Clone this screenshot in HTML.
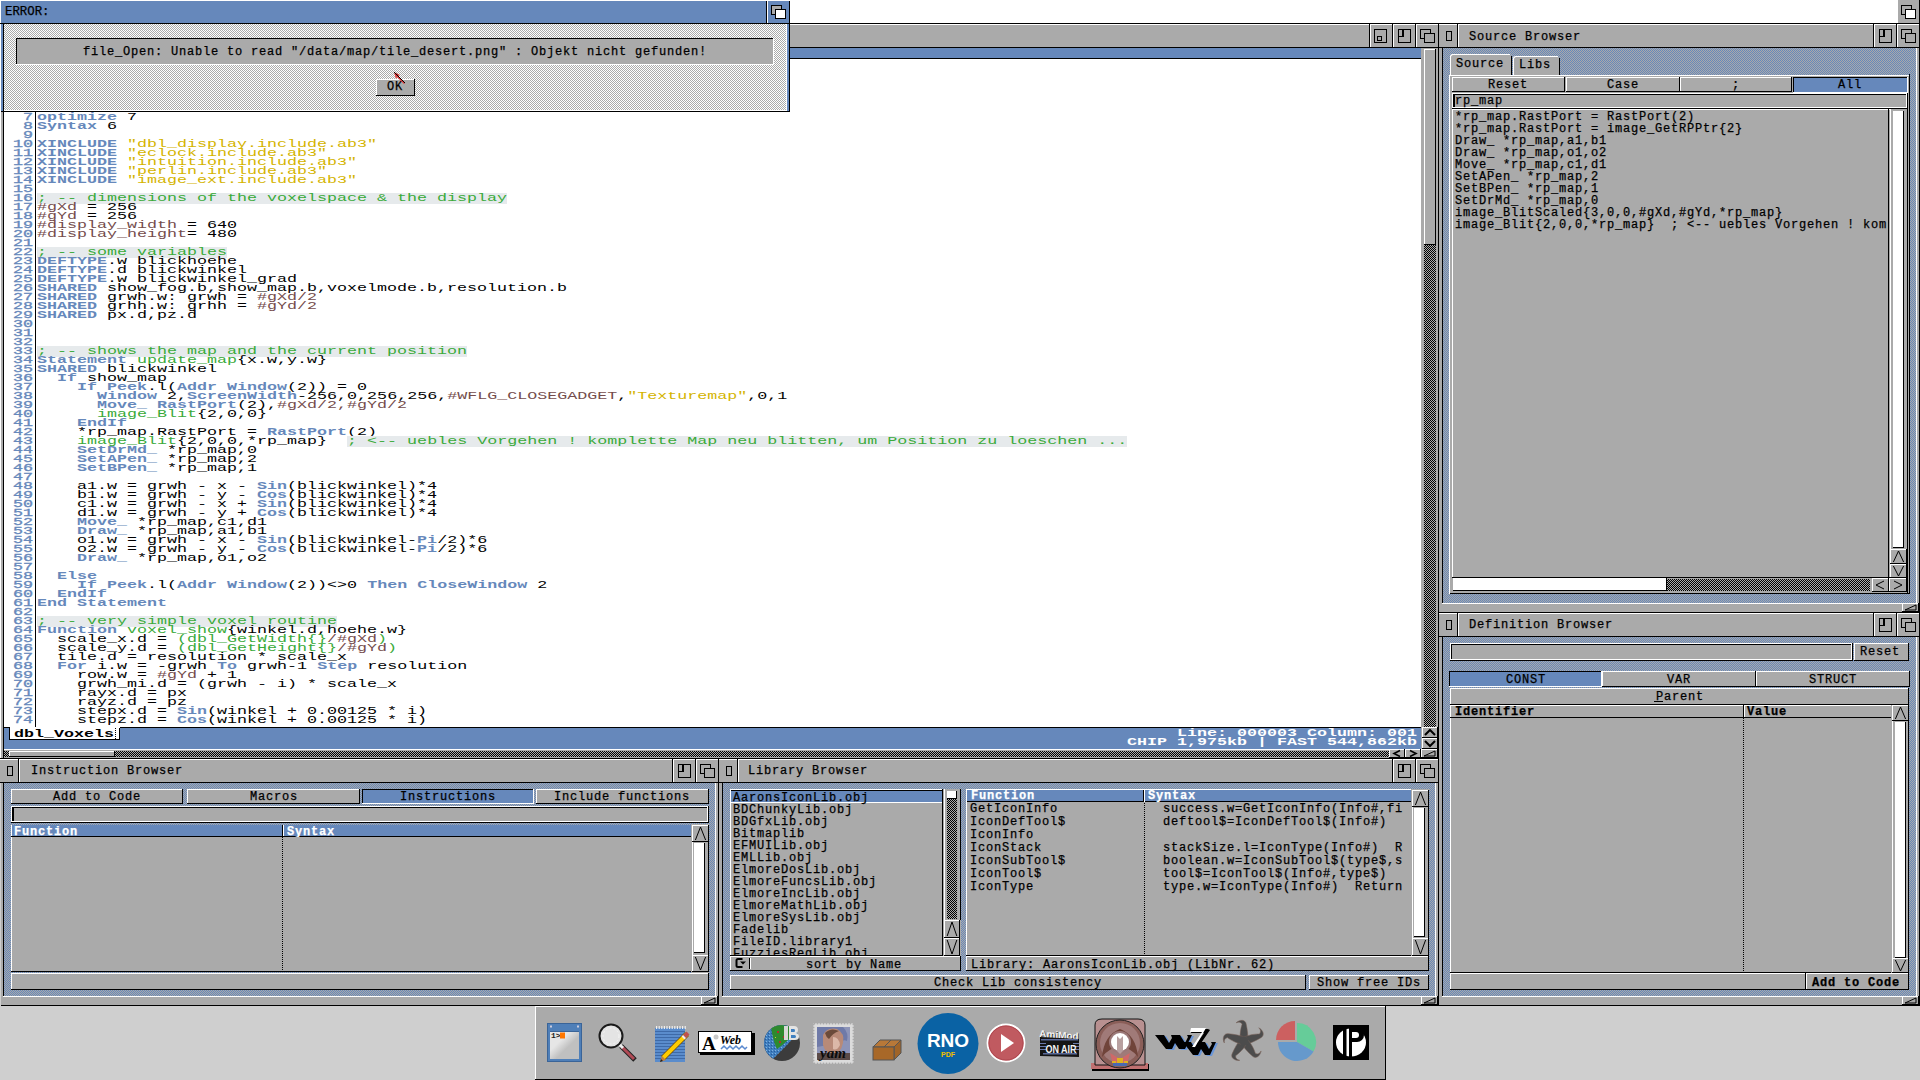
<!DOCTYPE html><html><head><meta charset="utf-8"><style>
*{margin:0;padding:0}
html,body{width:1920px;height:1080px;overflow:hidden;background:#cfcfcf}
body>div{position:absolute}
.t{position:absolute;white-space:pre;font-family:"Liberation Mono",monospace;transform-origin:0 0}
.c{position:absolute;white-space:pre;font-family:"Liberation Mono",monospace;font-size:10px;line-height:9px;transform-origin:0 0;transform:scaleX(1.6667);color:#000}
.K{color:#6688bb;font-weight:bold}.L{color:#6688bb;-webkit-text-stroke:0.3px #6688bb}.S{color:#d4b400}.C{color:#3aaa3a;background:#e6eaec}.F{color:#3aaa3a}.N{color:#744c4c}
</style></head><body><div style="left:0px;top:0px;width:1920px;height:1080px;background:#cfcfcf;"></div>
<div style="left:0px;top:0px;width:1920px;height:23px;background:#ffffff;"></div>
<div style="left:0px;top:23px;width:1439px;height:1px;background:#000000;"></div>
<div style="left:0px;top:24px;width:1439px;height:23px;background:#aaaaaa;"></div>
<div style="left:0px;top:24px;width:1439px;height:1px;background:#ffffff;"></div>
<div style="left:0px;top:47px;width:1439px;height:1px;background:#000000;"></div>
<div style="left:1369px;top:24px;width:1px;height:23px;background:#000000;"></div>
<div style="left:1370px;top:24px;width:1px;height:23px;background:#ffffff;"></div>
<div style="left:1374px;top:29px;width:13px;height:14px;background:#aaaaaa;border:1px solid #000;box-sizing:border-box;"></div>
<div style="left:1377px;top:36px;width:5px;height:5px;background:#aaaaaa;border:1px solid #000;box-sizing:border-box;"></div>
<div style="left:1392px;top:24px;width:1px;height:23px;background:#000000;"></div>
<div style="left:1393px;top:24px;width:1px;height:23px;background:#ffffff;"></div>
<div style="left:1398px;top:29px;width:13px;height:14px;background:#aaaaaa;border:1px solid #000;box-sizing:border-box;"></div>
<div style="left:1399px;top:30px;width:5px;height:7px;background:#aaaaaa;border-right:2px solid #000;border-bottom:1px solid #000;box-sizing:border-box;"></div>
<div style="left:1415px;top:24px;width:1px;height:23px;background:#000000;"></div>
<div style="left:1416px;top:24px;width:1px;height:23px;background:#ffffff;"></div>
<div style="left:1420px;top:29px;width:11px;height:10px;background:#aaaaaa;border:1px solid #000;box-sizing:border-box;"></div>
<div style="left:1424px;top:33px;width:11px;height:10px;background:#aaaaaa;border:1px solid #000;box-sizing:border-box;"></div>
<div style="left:1438px;top:23px;width:1px;height:25px;background:#000000;"></div>
<div style="left:0px;top:48px;width:3px;height:711px;background:#aaaaaa;"></div>
<div style="left:3px;top:48px;width:1px;height:711px;background:#000000;"></div>
<div style="left:0px;top:24px;width:1px;height:735px;background:#ffffff;"></div>
<div style="left:4px;top:48px;width:1417px;height:10px;background:#6688bb;"></div>
<div style="left:4px;top:58px;width:1417px;height:1px;background:#000000;"></div>
<div style="left:4px;top:59px;width:1417px;height:668px;background:#ffffff;"></div>
<div style="left:35px;top:59px;width:1px;height:668px;background:#000000;"></div>
<div style="left:1421px;top:48px;width:17px;height:711px;background:#aaaaaa;"></div>
<div style="left:1438px;top:48px;width:1px;height:711px;background:#000000;"></div>
<div style="left:1423px;top:48px;width:1px;height:679px;background:#aaaaaa;"></div>
<div style="left:1424px;top:48px;width:12px;height:679px;background:repeating-conic-gradient(#aaaaaa 0 25%,#000000 0 50%) 0 0/2px 2px;"></div>
<div style="left:1424px;top:48px;width:12px;height:2px;background:#aaaaaa;"></div>
<div style="left:1424px;top:49px;width:12px;height:196px;background:#aaaaaa;"></div>
<div style="left:1424px;top:49px;width:12px;height:1px;background:#ffffff;"></div>
<div style="left:1424px;top:49px;width:1px;height:196px;background:#ffffff;"></div>
<div style="left:1424px;top:244px;width:12px;height:1px;background:#000000;"></div>
<div style="left:1435px;top:49px;width:1px;height:196px;background:#000000;"></div>
<div style="left:1422px;top:727px;width:16px;height:11px;background:#aaaaaa;"></div>
<div style="left:1422px;top:727px;width:16px;height:1px;background:#ffffff;"></div>
<div style="left:1422px;top:727px;width:1px;height:11px;background:#ffffff;"></div>
<div style="left:1422px;top:737px;width:16px;height:1px;background:#000000;"></div>
<div style="left:1437px;top:727px;width:1px;height:11px;background:#000000;"></div>
<div style="left:1422px;top:738px;width:16px;height:11px;background:#aaaaaa;"></div>
<div style="left:1422px;top:738px;width:16px;height:1px;background:#ffffff;"></div>
<div style="left:1422px;top:738px;width:1px;height:11px;background:#ffffff;"></div>
<div style="left:1422px;top:748px;width:16px;height:1px;background:#000000;"></div>
<div style="left:1437px;top:738px;width:1px;height:11px;background:#000000;"></div>
<div style="left:4px;top:727px;width:1417px;height:1px;background:#000000;"></div>
<div style="left:4px;top:728px;width:1417px;height:21px;background:#6688bb;"></div>
<div style="left:10px;top:727px;width:110px;height:13px;background:#ffffff;"></div>
<div style="left:9px;top:728px;width:1px;height:12px;background:#000000;"></div>
<div style="left:9px;top:739px;width:111px;height:1px;background:#000000;"></div>
<div style="left:119px;top:728px;width:1px;height:12px;background:#000000;"></div>
<div style="left:4px;top:749px;width:1417px;height:1px;background:#ffffff;"></div>
<div style="left:4px;top:750px;width:1386px;height:1px;background:#aaaaaa;"></div>
<div style="left:4px;top:751px;width:1386px;height:6px;background:repeating-conic-gradient(#aaaaaa 0 25%,#000000 0 50%) 0 0/2px 2px;"></div>
<div style="left:9px;top:751px;width:106px;height:6px;background:#aaaaaa;"></div>
<div style="left:9px;top:751px;width:106px;height:1px;background:#ffffff;"></div>
<div style="left:9px;top:751px;width:1px;height:6px;background:#ffffff;"></div>
<div style="left:9px;top:756px;width:106px;height:1px;background:#000000;"></div>
<div style="left:114px;top:751px;width:1px;height:6px;background:#000000;"></div>
<div style="left:4px;top:757px;width:1386px;height:1px;background:#aaaaaa;"></div>
<div style="left:1389px;top:749px;width:16px;height:9px;background:#aaaaaa;"></div>
<div style="left:1389px;top:749px;width:16px;height:1px;background:#ffffff;"></div>
<div style="left:1389px;top:749px;width:1px;height:9px;background:#ffffff;"></div>
<div style="left:1389px;top:757px;width:16px;height:1px;background:#000000;"></div>
<div style="left:1404px;top:749px;width:1px;height:9px;background:#000000;"></div>
<div style="left:1405px;top:749px;width:16px;height:9px;background:#aaaaaa;"></div>
<div style="left:1405px;top:749px;width:16px;height:1px;background:#ffffff;"></div>
<div style="left:1405px;top:749px;width:1px;height:9px;background:#ffffff;"></div>
<div style="left:1405px;top:757px;width:16px;height:1px;background:#000000;"></div>
<div style="left:1420px;top:749px;width:1px;height:9px;background:#000000;"></div>
<div style="left:1421px;top:749px;width:17px;height:9px;background:#aaaaaa;"></div>
<div style="left:1421px;top:749px;width:17px;height:1px;background:#ffffff;"></div>
<div style="left:1421px;top:749px;width:1px;height:9px;background:#ffffff;"></div>
<div style="left:1421px;top:757px;width:17px;height:1px;background:#000000;"></div>
<div style="left:1437px;top:749px;width:1px;height:9px;background:#000000;"></div>
<div style="left:0px;top:758px;width:1439px;height:1px;background:#000000;"></div>
<div class="c" style="left:3px;top:113px;font-weight:normal"><span class="L">  7</span></div>
<div class="c" style="left:37px;top:113px;font-weight:normal"><span class="K">optimize</span> 7</div>
<div class="c" style="left:3px;top:122px;font-weight:normal"><span class="L">  8</span></div>
<div class="c" style="left:37px;top:122px;font-weight:normal"><span class="K">Syntax</span> 6</div>
<div class="c" style="left:3px;top:131px;font-weight:normal"><span class="L">  9</span></div>
<div class="c" style="left:3px;top:140px;font-weight:normal"><span class="L"> 10</span></div>
<div class="c" style="left:37px;top:140px;font-weight:normal"><span class="K">XINCLUDE</span> <span class="S">"dbl_display.include.ab3"</span></div>
<div class="c" style="left:3px;top:149px;font-weight:normal"><span class="L"> 11</span></div>
<div class="c" style="left:37px;top:149px;font-weight:normal"><span class="K">XINCLUDE</span> <span class="S">"eclock.include.ab3"</span></div>
<div class="c" style="left:3px;top:158px;font-weight:normal"><span class="L"> 12</span></div>
<div class="c" style="left:37px;top:158px;font-weight:normal"><span class="K">XINCLUDE</span> <span class="S">"intuition.include.ab3"</span></div>
<div class="c" style="left:3px;top:167px;font-weight:normal"><span class="L"> 13</span></div>
<div class="c" style="left:37px;top:167px;font-weight:normal"><span class="K">XINCLUDE</span> <span class="S">"perlin.include.ab3"</span></div>
<div class="c" style="left:3px;top:176px;font-weight:normal"><span class="L"> 14</span></div>
<div class="c" style="left:37px;top:176px;font-weight:normal"><span class="K">XINCLUDE</span> <span class="S">"image_ext.include.ab3"</span></div>
<div class="c" style="left:3px;top:185px;font-weight:normal"><span class="L"> 15</span></div>
<div class="c" style="left:3px;top:194px;font-weight:normal"><span class="L"> 16</span></div>
<div class="c" style="left:37px;top:194px;font-weight:normal"><span class="C">; -- dimensions of the voxelspace &amp; the display</span></div>
<div class="c" style="left:3px;top:203px;font-weight:normal"><span class="L"> 17</span></div>
<div class="c" style="left:37px;top:203px;font-weight:normal"><span class="N">#gXd</span> = 256</div>
<div class="c" style="left:3px;top:212px;font-weight:normal"><span class="L"> 18</span></div>
<div class="c" style="left:37px;top:212px;font-weight:normal"><span class="N">#gYd</span> = 256</div>
<div class="c" style="left:3px;top:221px;font-weight:normal"><span class="L"> 19</span></div>
<div class="c" style="left:37px;top:221px;font-weight:normal"><span class="N">#display_width</span> = 640</div>
<div class="c" style="left:3px;top:230px;font-weight:normal"><span class="L"> 20</span></div>
<div class="c" style="left:37px;top:230px;font-weight:normal"><span class="N">#display_height</span>= 480</div>
<div class="c" style="left:3px;top:239px;font-weight:normal"><span class="L"> 21</span></div>
<div class="c" style="left:3px;top:248px;font-weight:normal"><span class="L"> 22</span></div>
<div class="c" style="left:37px;top:248px;font-weight:normal"><span class="C">; -- some variables</span></div>
<div class="c" style="left:3px;top:257px;font-weight:normal"><span class="L"> 23</span></div>
<div class="c" style="left:37px;top:257px;font-weight:normal"><span class="K">DEFTYPE</span>.w blickhoehe</div>
<div class="c" style="left:3px;top:266px;font-weight:normal"><span class="L"> 24</span></div>
<div class="c" style="left:37px;top:266px;font-weight:normal"><span class="K">DEFTYPE</span>.d blickwinkel</div>
<div class="c" style="left:3px;top:275px;font-weight:normal"><span class="L"> 25</span></div>
<div class="c" style="left:37px;top:275px;font-weight:normal"><span class="K">DEFTYPE</span>.w blickwinkel_grad</div>
<div class="c" style="left:3px;top:284px;font-weight:normal"><span class="L"> 26</span></div>
<div class="c" style="left:37px;top:284px;font-weight:normal"><span class="K">SHARED</span> show_fog.b,show_map.b,voxelmode.b,resolution.b</div>
<div class="c" style="left:3px;top:293px;font-weight:normal"><span class="L"> 27</span></div>
<div class="c" style="left:37px;top:293px;font-weight:normal"><span class="K">SHARED</span> grwh.w: grwh = <span class="N">#gXd/2</span></div>
<div class="c" style="left:3px;top:302px;font-weight:normal"><span class="L"> 28</span></div>
<div class="c" style="left:37px;top:302px;font-weight:normal"><span class="K">SHARED</span> grhh.w: grhh = <span class="N">#gYd/2</span></div>
<div class="c" style="left:3px;top:311px;font-weight:normal"><span class="L"> 29</span></div>
<div class="c" style="left:37px;top:311px;font-weight:normal"><span class="K">SHARED</span> px.d,pz.d</div>
<div class="c" style="left:3px;top:320px;font-weight:normal"><span class="L"> 30</span></div>
<div class="c" style="left:3px;top:329px;font-weight:normal"><span class="L"> 31</span></div>
<div class="c" style="left:3px;top:338px;font-weight:normal"><span class="L"> 32</span></div>
<div class="c" style="left:3px;top:347px;font-weight:normal"><span class="L"> 33</span></div>
<div class="c" style="left:37px;top:347px;font-weight:normal"><span class="C">; -- shows the map and the current position</span></div>
<div class="c" style="left:3px;top:356px;font-weight:normal"><span class="L"> 34</span></div>
<div class="c" style="left:37px;top:356px;font-weight:normal"><span class="K">Statement</span> <span class="F">update_map</span>{x.w,y.w}</div>
<div class="c" style="left:3px;top:365px;font-weight:normal"><span class="L"> 35</span></div>
<div class="c" style="left:37px;top:365px;font-weight:normal"><span class="K">SHARED</span> blickwinkel</div>
<div class="c" style="left:3px;top:374px;font-weight:normal"><span class="L"> 36</span></div>
<div class="c" style="left:37px;top:374px;font-weight:normal">  <span class="K">If</span> show_map</div>
<div class="c" style="left:3px;top:383px;font-weight:normal"><span class="L"> 37</span></div>
<div class="c" style="left:37px;top:383px;font-weight:normal">    <span class="K">If Peek</span>.l(<span class="K">Addr Window</span>(2)) = 0</div>
<div class="c" style="left:3px;top:392px;font-weight:normal"><span class="L"> 38</span></div>
<div class="c" style="left:37px;top:392px;font-weight:normal">      <span class="K">Window</span> 2,<span class="K">ScreenWidth</span>-256,0,256,256,<span class="N">#WFLG_CLOSEGADGET</span>,<span class="S">"Texturemap"</span>,0,1</div>
<div class="c" style="left:3px;top:401px;font-weight:normal"><span class="L"> 39</span></div>
<div class="c" style="left:37px;top:401px;font-weight:normal">      <span class="K">Move_ RastPort</span>(2),<span class="N">#gXd/2,#gYd/2</span></div>
<div class="c" style="left:3px;top:410px;font-weight:normal"><span class="L"> 40</span></div>
<div class="c" style="left:37px;top:410px;font-weight:normal">      <span class="F">image_Blit</span>{2,0,0}</div>
<div class="c" style="left:3px;top:419px;font-weight:normal"><span class="L"> 41</span></div>
<div class="c" style="left:37px;top:419px;font-weight:normal">    <span class="K">EndIf</span></div>
<div class="c" style="left:3px;top:428px;font-weight:normal"><span class="L"> 42</span></div>
<div class="c" style="left:37px;top:428px;font-weight:normal">    *rp_map.RastPort = <span class="K">RastPort</span>(2)</div>
<div class="c" style="left:3px;top:437px;font-weight:normal"><span class="L"> 43</span></div>
<div class="c" style="left:37px;top:437px;font-weight:normal">    <span class="F">image_Blit</span>{2,0,0,*rp_map}  <span class="C">; &lt;-- uebles Vorgehen ! komplette Map neu blitten, um Position zu loeschen ...</span></div>
<div class="c" style="left:3px;top:446px;font-weight:normal"><span class="L"> 44</span></div>
<div class="c" style="left:37px;top:446px;font-weight:normal">    <span class="K">SetDrMd_</span> *rp_map,0</div>
<div class="c" style="left:3px;top:455px;font-weight:normal"><span class="L"> 45</span></div>
<div class="c" style="left:37px;top:455px;font-weight:normal">    <span class="K">SetAPen_</span> *rp_map,2</div>
<div class="c" style="left:3px;top:464px;font-weight:normal"><span class="L"> 46</span></div>
<div class="c" style="left:37px;top:464px;font-weight:normal">    <span class="K">SetBPen_</span> *rp_map,1</div>
<div class="c" style="left:3px;top:473px;font-weight:normal"><span class="L"> 47</span></div>
<div class="c" style="left:3px;top:482px;font-weight:normal"><span class="L"> 48</span></div>
<div class="c" style="left:37px;top:482px;font-weight:normal">    a1.w = grwh - x - <span class="K">Sin</span>(blickwinkel)*4</div>
<div class="c" style="left:3px;top:491px;font-weight:normal"><span class="L"> 49</span></div>
<div class="c" style="left:37px;top:491px;font-weight:normal">    b1.w = grwh - y - <span class="K">Cos</span>(blickwinkel)*4</div>
<div class="c" style="left:3px;top:500px;font-weight:normal"><span class="L"> 50</span></div>
<div class="c" style="left:37px;top:500px;font-weight:normal">    c1.w = grwh - x + <span class="K">Sin</span>(blickwinkel)*4</div>
<div class="c" style="left:3px;top:509px;font-weight:normal"><span class="L"> 51</span></div>
<div class="c" style="left:37px;top:509px;font-weight:normal">    d1.w = grwh - y + <span class="K">Cos</span>(blickwinkel)*4</div>
<div class="c" style="left:3px;top:518px;font-weight:normal"><span class="L"> 52</span></div>
<div class="c" style="left:37px;top:518px;font-weight:normal">    <span class="K">Move_</span> *rp_map,c1,d1</div>
<div class="c" style="left:3px;top:527px;font-weight:normal"><span class="L"> 53</span></div>
<div class="c" style="left:37px;top:527px;font-weight:normal">    <span class="K">Draw_</span> *rp_map,a1,b1</div>
<div class="c" style="left:3px;top:536px;font-weight:normal"><span class="L"> 54</span></div>
<div class="c" style="left:37px;top:536px;font-weight:normal">    o1.w = grwh - x - <span class="K">Sin</span>(blickwinkel-<span class="K">Pi</span>/2)*6</div>
<div class="c" style="left:3px;top:545px;font-weight:normal"><span class="L"> 55</span></div>
<div class="c" style="left:37px;top:545px;font-weight:normal">    o2.w = grwh - y - <span class="K">Cos</span>(blickwinkel-<span class="K">Pi</span>/2)*6</div>
<div class="c" style="left:3px;top:554px;font-weight:normal"><span class="L"> 56</span></div>
<div class="c" style="left:37px;top:554px;font-weight:normal">    <span class="K">Draw_</span> *rp_map,o1,o2</div>
<div class="c" style="left:3px;top:563px;font-weight:normal"><span class="L"> 57</span></div>
<div class="c" style="left:3px;top:572px;font-weight:normal"><span class="L"> 58</span></div>
<div class="c" style="left:37px;top:572px;font-weight:normal">  <span class="K">Else</span></div>
<div class="c" style="left:3px;top:581px;font-weight:normal"><span class="L"> 59</span></div>
<div class="c" style="left:37px;top:581px;font-weight:normal">    <span class="K">If Peek</span>.l(<span class="K">Addr Window</span>(2))&lt;&gt;0 <span class="K">Then CloseWindow</span> 2</div>
<div class="c" style="left:3px;top:590px;font-weight:normal"><span class="L"> 60</span></div>
<div class="c" style="left:37px;top:590px;font-weight:normal">  <span class="K">EndIf</span></div>
<div class="c" style="left:3px;top:599px;font-weight:normal"><span class="L"> 61</span></div>
<div class="c" style="left:37px;top:599px;font-weight:normal"><span class="K">End Statement</span></div>
<div class="c" style="left:3px;top:608px;font-weight:normal"><span class="L"> 62</span></div>
<div class="c" style="left:3px;top:617px;font-weight:normal"><span class="L"> 63</span></div>
<div class="c" style="left:37px;top:617px;font-weight:normal"><span class="C">; -- very simple voxel routine</span></div>
<div class="c" style="left:3px;top:626px;font-weight:normal"><span class="L"> 64</span></div>
<div class="c" style="left:37px;top:626px;font-weight:normal"><span class="K">Function</span> <span class="F">voxel_show</span>{winkel.d,hoehe.w}</div>
<div class="c" style="left:3px;top:635px;font-weight:normal"><span class="L"> 65</span></div>
<div class="c" style="left:37px;top:635px;font-weight:normal">  scale_x.d = <span class="F">(dbl_GetWidth{}</span><span class="N">/#gXd</span><span class="F">)</span></div>
<div class="c" style="left:3px;top:644px;font-weight:normal"><span class="L"> 66</span></div>
<div class="c" style="left:37px;top:644px;font-weight:normal">  scale_y.d = <span class="F">(dbl_GetHeight{}</span><span class="N">/#gYd</span><span class="F">)</span></div>
<div class="c" style="left:3px;top:653px;font-weight:normal"><span class="L"> 67</span></div>
<div class="c" style="left:37px;top:653px;font-weight:normal">  tile.d = resolution * scale_x</div>
<div class="c" style="left:3px;top:662px;font-weight:normal"><span class="L"> 68</span></div>
<div class="c" style="left:37px;top:662px;font-weight:normal">  <span class="K">For</span> i.w = -grwh <span class="K">To</span> grwh-1 <span class="K">Step</span> resolution</div>
<div class="c" style="left:3px;top:671px;font-weight:normal"><span class="L"> 69</span></div>
<div class="c" style="left:37px;top:671px;font-weight:normal">    row.w = <span class="N">#gYd</span> + 1</div>
<div class="c" style="left:3px;top:680px;font-weight:normal"><span class="L"> 70</span></div>
<div class="c" style="left:37px;top:680px;font-weight:normal">    grwh_mi.d = (grwh - i) * scale_x</div>
<div class="c" style="left:3px;top:689px;font-weight:normal"><span class="L"> 71</span></div>
<div class="c" style="left:37px;top:689px;font-weight:normal">    rayx.d = px</div>
<div class="c" style="left:3px;top:698px;font-weight:normal"><span class="L"> 72</span></div>
<div class="c" style="left:37px;top:698px;font-weight:normal">    rayz.d = pz</div>
<div class="c" style="left:3px;top:707px;font-weight:normal"><span class="L"> 73</span></div>
<div class="c" style="left:37px;top:707px;font-weight:normal">    stepx.d = <span class="K">Sin</span>(winkel + 0.00125 * i)</div>
<div class="c" style="left:3px;top:716px;font-weight:normal"><span class="L"> 74</span></div>
<div class="c" style="left:37px;top:716px;font-weight:normal">    stepz.d = <span class="K">Cos</span>(winkel + 0.00125 * i)</div>
<div style="left:1439px;top:23px;width:481px;height:1px;background:#000000;"></div>
<div style="left:1439px;top:24px;width:481px;height:23px;background:#aaaaaa;"></div>
<div style="left:1439px;top:24px;width:481px;height:1px;background:#ffffff;"></div>
<div style="left:1439px;top:47px;width:481px;height:1px;background:#000000;"></div>
<div style="left:1873px;top:24px;width:1px;height:23px;background:#000000;"></div>
<div style="left:1874px;top:24px;width:1px;height:23px;background:#ffffff;"></div>
<div style="left:1879px;top:29px;width:13px;height:14px;background:#aaaaaa;border:1px solid #000;box-sizing:border-box;"></div>
<div style="left:1880px;top:30px;width:5px;height:7px;background:#aaaaaa;border-right:2px solid #000;border-bottom:1px solid #000;box-sizing:border-box;"></div>
<div style="left:1896px;top:24px;width:1px;height:23px;background:#000000;"></div>
<div style="left:1897px;top:24px;width:1px;height:23px;background:#ffffff;"></div>
<div style="left:1901px;top:29px;width:11px;height:10px;background:#aaaaaa;border:1px solid #000;box-sizing:border-box;"></div>
<div style="left:1905px;top:33px;width:11px;height:10px;background:#aaaaaa;border:1px solid #000;box-sizing:border-box;"></div>
<div style="left:1919px;top:23px;width:1px;height:25px;background:#000000;"></div>
<div style="left:1446px;top:31px;width:6px;height:10px;background:#aaaaaa;border:1px solid #000;box-sizing:border-box;"></div>
<div style="left:1457px;top:24px;width:1px;height:23px;background:#000000;"></div>
<div style="left:1458px;top:24px;width:1px;height:23px;background:#ffffff;"></div>
<div class="t" style="left:1469px;top:31px;font-weight:normal;font-size:12px;line-height:12px;color:#000000;letter-spacing:0.80px;-webkit-text-stroke:0.25px currentColor;">Source Browser</div>
<div style="left:1439px;top:48px;width:481px;height:565px;background:#aaaaaa;"></div>
<div style="left:1442px;top:48px;width:1px;height:555px;background:#000000;"></div>
<div style="left:1443px;top:48px;width:473px;height:555px;background:repeating-conic-gradient(#6688bb 0 25%,#aaaaaa 0 50%) 0 0/2px 2px;"></div>
<div style="left:1916px;top:48px;width:1px;height:555px;background:#ffffff;"></div>
<div style="left:1442px;top:603px;width:475px;height:1px;background:#ffffff;"></div>
<div style="left:1919px;top:48px;width:1px;height:565px;background:#000000;"></div>
<div style="left:1439px;top:612px;width:481px;height:1px;background:#000000;"></div>
<div style="left:1902px;top:603px;width:17px;height:9px;background:#aaaaaa;"></div>
<div style="left:1902px;top:603px;width:17px;height:1px;background:#ffffff;"></div>
<div style="left:1902px;top:603px;width:1px;height:9px;background:#ffffff;"></div>
<div style="left:1902px;top:611px;width:17px;height:1px;background:#000000;"></div>
<div style="left:1918px;top:603px;width:1px;height:9px;background:#000000;"></div>
<svg style="position:absolute;left:1902px;top:603px" width="17" height="9" viewBox="0 0 17 9"><polygon points="14,2 14,7 3,7" fill="none" stroke="#000" stroke-width="1"/></svg>
<div style="left:1450px;top:54px;width:62px;height:21px;background:#aaaaaa;border-top-left-radius:4px;border-top-right-radius:4px;"></div>
<div style="left:1452px;top:54px;width:58px;height:1px;background:#ffffff;"></div>
<div style="left:1450px;top:56px;width:1px;height:19px;background:#ffffff;"></div>
<div style="left:1511px;top:56px;width:1px;height:19px;background:#000000;"></div>
<div style="left:1450px;top:54px;width:3px;height:3px;border-top-left-radius:4px;border-top:1px solid #fff;border-left:1px solid #fff;box-sizing:border-box;"></div>
<div class="t" style="left:1456px;top:58px;font-weight:normal;font-size:12px;line-height:12px;color:#000000;letter-spacing:0.80px;-webkit-text-stroke:0.25px currentColor;">Source</div>
<div style="left:1513px;top:56px;width:47px;height:19px;background:#aaaaaa;border-top-left-radius:4px;border-top-right-radius:4px;"></div>
<div style="left:1515px;top:56px;width:43px;height:1px;background:#ffffff;"></div>
<div style="left:1513px;top:58px;width:1px;height:17px;background:#ffffff;"></div>
<div style="left:1559px;top:58px;width:1px;height:17px;background:#000000;"></div>
<div style="left:1513px;top:56px;width:3px;height:3px;border-top-left-radius:4px;border-top:1px solid #fff;border-left:1px solid #fff;box-sizing:border-box;"></div>
<div class="t" style="left:1519px;top:59px;font-weight:normal;font-size:12px;line-height:12px;color:#000000;letter-spacing:0.80px;-webkit-text-stroke:0.25px currentColor;">Libs</div>
<div style="left:1450px;top:75px;width:460px;height:519px;background:#aaaaaa;"></div>
<div style="left:1450px;top:75px;width:460px;height:1px;background:#ffffff;"></div>
<div style="left:1449px;top:75px;width:1px;height:519px;background:#ffffff;"></div>
<div style="left:1909px;top:74px;width:1px;height:520px;background:#000000;"></div>
<div style="left:1450px;top:593px;width:460px;height:1px;background:#000000;"></div>
<div style="left:1512px;top:75px;width:47px;height:1px;background:#aaaaaa;"></div>
<div style="left:1512px;top:75px;width:48px;height:1px;background:#ffffff;"></div>
<div style="left:1452px;top:77px;width:113px;height:15px;background:#aaaaaa;"></div>
<div style="left:1452px;top:77px;width:113px;height:1px;background:#ffffff;"></div>
<div style="left:1452px;top:77px;width:1px;height:15px;background:#ffffff;"></div>
<div style="left:1452px;top:91px;width:113px;height:1px;background:#000000;"></div>
<div style="left:1564px;top:77px;width:1px;height:15px;background:#000000;"></div>
<div class="t" style="left:1488px;top:79px;font-weight:normal;font-size:12px;line-height:12px;color:#000000;letter-spacing:0.80px;-webkit-text-stroke:0.25px currentColor;">Reset</div>
<div style="left:1566px;top:77px;width:114px;height:15px;background:#aaaaaa;"></div>
<div style="left:1566px;top:77px;width:114px;height:1px;background:#ffffff;"></div>
<div style="left:1566px;top:77px;width:1px;height:15px;background:#ffffff;"></div>
<div style="left:1566px;top:91px;width:114px;height:1px;background:#000000;"></div>
<div style="left:1679px;top:77px;width:1px;height:15px;background:#000000;"></div>
<div class="t" style="left:1607px;top:79px;font-weight:normal;font-size:12px;line-height:12px;color:#000000;letter-spacing:0.80px;-webkit-text-stroke:0.25px currentColor;">Case</div>
<div style="left:1680px;top:77px;width:112px;height:15px;background:#aaaaaa;"></div>
<div style="left:1680px;top:77px;width:112px;height:1px;background:#ffffff;"></div>
<div style="left:1680px;top:77px;width:1px;height:15px;background:#ffffff;"></div>
<div style="left:1680px;top:91px;width:112px;height:1px;background:#000000;"></div>
<div style="left:1791px;top:77px;width:1px;height:15px;background:#000000;"></div>
<div class="t" style="left:1732px;top:79px;font-weight:normal;font-size:12px;line-height:12px;color:#000000;letter-spacing:0.80px;-webkit-text-stroke:0.25px currentColor;">;</div>
<div style="left:1793px;top:77px;width:115px;height:16px;background:#6688bb;"></div>
<div style="left:1793px;top:77px;width:115px;height:1px;background:#000000;"></div>
<div style="left:1793px;top:77px;width:1px;height:16px;background:#000000;"></div>
<div style="left:1793px;top:92px;width:115px;height:1px;background:#ffffff;"></div>
<div style="left:1907px;top:77px;width:1px;height:16px;background:#ffffff;"></div>
<div class="t" style="left:1838px;top:79px;font-weight:normal;font-size:12px;line-height:12px;color:#000000;letter-spacing:0.80px;-webkit-text-stroke:0.25px currentColor;">All</div>
<div style="left:1452px;top:93px;width:456px;height:16px;background:#aaaaaa;"></div>
<div style="left:1452px;top:93px;width:456px;height:1px;background:#ffffff;"></div>
<div style="left:1452px;top:93px;width:1px;height:16px;background:#ffffff;"></div>
<div style="left:1452px;top:108px;width:456px;height:1px;background:#000000;"></div>
<div style="left:1907px;top:93px;width:1px;height:16px;background:#000000;"></div>
<div style="left:1453px;top:94px;width:454px;height:1px;background:#000000;"></div>
<div style="left:1453px;top:94px;width:1px;height:14px;background:#000000;"></div>
<div style="left:1453px;top:107px;width:454px;height:1px;background:#ffffff;"></div>
<div style="left:1906px;top:94px;width:1px;height:14px;background:#ffffff;"></div>
<div style="left:1454px;top:95px;width:1px;height:12px;background:#000000;"></div>
<div class="t" style="left:1455px;top:95px;font-weight:normal;font-size:12px;line-height:12px;color:#000000;letter-spacing:0.80px;-webkit-text-stroke:0.25px currentColor;">rp_map</div>
<div style="left:1452px;top:109px;width:438px;height:469px;background:#aaaaaa;"></div>
<div style="left:1452px;top:109px;width:438px;height:1px;background:#ffffff;"></div>
<div style="left:1452px;top:109px;width:1px;height:469px;background:#ffffff;"></div>
<div style="left:1888px;top:109px;width:1px;height:469px;background:#000000;"></div>
<div class="t" style="left:1455px;top:111px;font-weight:normal;font-size:12px;line-height:12px;color:#000000;letter-spacing:0.80px;-webkit-text-stroke:0.25px currentColor;">*rp_map.RastPort = RastPort(2)</div>
<div class="t" style="left:1455px;top:123px;font-weight:normal;font-size:12px;line-height:12px;color:#000000;letter-spacing:0.80px;-webkit-text-stroke:0.25px currentColor;">*rp_map.RastPort = image_GetRPPtr{2}</div>
<div class="t" style="left:1455px;top:135px;font-weight:normal;font-size:12px;line-height:12px;color:#000000;letter-spacing:0.80px;-webkit-text-stroke:0.25px currentColor;">Draw_ *rp_map,a1,b1</div>
<div class="t" style="left:1455px;top:147px;font-weight:normal;font-size:12px;line-height:12px;color:#000000;letter-spacing:0.80px;-webkit-text-stroke:0.25px currentColor;">Draw_ *rp_map,o1,o2</div>
<div class="t" style="left:1455px;top:159px;font-weight:normal;font-size:12px;line-height:12px;color:#000000;letter-spacing:0.80px;-webkit-text-stroke:0.25px currentColor;">Move_ *rp_map,c1,d1</div>
<div class="t" style="left:1455px;top:171px;font-weight:normal;font-size:12px;line-height:12px;color:#000000;letter-spacing:0.80px;-webkit-text-stroke:0.25px currentColor;">SetAPen_ *rp_map,2</div>
<div class="t" style="left:1455px;top:183px;font-weight:normal;font-size:12px;line-height:12px;color:#000000;letter-spacing:0.80px;-webkit-text-stroke:0.25px currentColor;">SetBPen_ *rp_map,1</div>
<div class="t" style="left:1455px;top:195px;font-weight:normal;font-size:12px;line-height:12px;color:#000000;letter-spacing:0.80px;-webkit-text-stroke:0.25px currentColor;">SetDrMd_ *rp_map,0</div>
<div class="t" style="left:1455px;top:207px;font-weight:normal;font-size:12px;line-height:12px;color:#000000;letter-spacing:0.80px;-webkit-text-stroke:0.25px currentColor;">image_BlitScaled{3,0,0,#gXd,#gYd,*rp_map}</div>
<div class="t" style="left:1455px;top:219px;font-weight:normal;font-size:12px;line-height:12px;color:#000000;letter-spacing:0.80px;-webkit-text-stroke:0.25px currentColor;">image_Blit{2,0,0,*rp_map}  ; &lt;-- uebles Vorgehen ! kom</div>
<div style="left:1890px;top:109px;width:18px;height:484px;background:#aaaaaa;"></div>
<div style="left:1890px;top:109px;width:1px;height:441px;background:#ffffff;"></div>
<div style="left:1907px;top:109px;width:1px;height:484px;background:#000000;"></div>
<div style="left:1893px;top:111px;width:11px;height:437px;background:#ffffff;"></div>
<div style="left:1893px;top:111px;width:11px;height:1px;background:#ffffff;"></div>
<div style="left:1893px;top:111px;width:1px;height:437px;background:#ffffff;"></div>
<div style="left:1893px;top:547px;width:11px;height:1px;background:#000000;"></div>
<div style="left:1903px;top:111px;width:1px;height:437px;background:#000000;"></div>
<div style="left:1890px;top:549px;width:17px;height:15px;background:#aaaaaa;"></div>
<div style="left:1890px;top:549px;width:17px;height:1px;background:#ffffff;"></div>
<div style="left:1890px;top:549px;width:1px;height:15px;background:#ffffff;"></div>
<div style="left:1890px;top:563px;width:17px;height:1px;background:#000000;"></div>
<div style="left:1906px;top:549px;width:1px;height:15px;background:#000000;"></div>
<svg style="position:absolute;left:1890px;top:549px" width="17" height="15"><polyline points="3.4,13 8.5,2 13.6,13" fill="none" stroke="#000" stroke-width="1"/></svg>
<div style="left:1890px;top:564px;width:17px;height:14px;background:#aaaaaa;"></div>
<div style="left:1890px;top:564px;width:17px;height:1px;background:#ffffff;"></div>
<div style="left:1890px;top:564px;width:1px;height:14px;background:#ffffff;"></div>
<div style="left:1890px;top:577px;width:17px;height:1px;background:#000000;"></div>
<div style="left:1906px;top:564px;width:1px;height:14px;background:#000000;"></div>
<svg style="position:absolute;left:1890px;top:564px" width="17" height="14"><polyline points="3.4,2 8.5,12 13.6,2" fill="none" stroke="#000" stroke-width="1"/></svg>
<div style="left:1452px;top:577px;width:438px;height:1px;background:#000000;"></div>
<div style="left:1454px;top:579px;width:416px;height:12px;background:repeating-conic-gradient(#aaaaaa 0 25%,#000000 0 50%) 0 0/2px 2px;"></div>
<div style="left:1453px;top:578px;width:214px;height:13px;background:#ffffff;"></div>
<div style="left:1453px;top:578px;width:214px;height:1px;background:#ffffff;"></div>
<div style="left:1453px;top:578px;width:1px;height:13px;background:#ffffff;"></div>
<div style="left:1453px;top:590px;width:214px;height:1px;background:#000000;"></div>
<div style="left:1666px;top:578px;width:1px;height:13px;background:#000000;"></div>
<div style="left:1872px;top:578px;width:17px;height:14px;background:#aaaaaa;"></div>
<div style="left:1872px;top:578px;width:17px;height:1px;background:#ffffff;"></div>
<div style="left:1872px;top:578px;width:1px;height:14px;background:#ffffff;"></div>
<div style="left:1872px;top:591px;width:17px;height:1px;background:#000000;"></div>
<div style="left:1888px;top:578px;width:1px;height:14px;background:#000000;"></div>
<svg style="position:absolute;left:1872px;top:578px" width="17" height="14" viewBox="0 0 17 14"><polyline points="12,3 4,7 12,11" fill="none" stroke="#000"/></svg>
<div style="left:1889px;top:578px;width:18px;height:14px;background:#aaaaaa;"></div>
<div style="left:1889px;top:578px;width:18px;height:1px;background:#ffffff;"></div>
<div style="left:1889px;top:578px;width:1px;height:14px;background:#ffffff;"></div>
<div style="left:1889px;top:591px;width:18px;height:1px;background:#000000;"></div>
<div style="left:1906px;top:578px;width:1px;height:14px;background:#000000;"></div>
<svg style="position:absolute;left:1889px;top:578px" width="18" height="14" viewBox="0 0 18 14"><polyline points="5,3 13,7 5,11" fill="none" stroke="#000"/></svg>
<div style="left:1439px;top:612px;width:481px;height:1px;background:#000000;"></div>
<div style="left:1439px;top:613px;width:481px;height:23px;background:#aaaaaa;"></div>
<div style="left:1439px;top:613px;width:481px;height:1px;background:#ffffff;"></div>
<div style="left:1439px;top:636px;width:481px;height:1px;background:#000000;"></div>
<div style="left:1873px;top:613px;width:1px;height:23px;background:#000000;"></div>
<div style="left:1874px;top:613px;width:1px;height:23px;background:#ffffff;"></div>
<div style="left:1879px;top:618px;width:13px;height:14px;background:#aaaaaa;border:1px solid #000;box-sizing:border-box;"></div>
<div style="left:1880px;top:619px;width:5px;height:7px;background:#aaaaaa;border-right:2px solid #000;border-bottom:1px solid #000;box-sizing:border-box;"></div>
<div style="left:1896px;top:613px;width:1px;height:23px;background:#000000;"></div>
<div style="left:1897px;top:613px;width:1px;height:23px;background:#ffffff;"></div>
<div style="left:1901px;top:618px;width:11px;height:10px;background:#aaaaaa;border:1px solid #000;box-sizing:border-box;"></div>
<div style="left:1905px;top:622px;width:11px;height:10px;background:#aaaaaa;border:1px solid #000;box-sizing:border-box;"></div>
<div style="left:1919px;top:612px;width:1px;height:25px;background:#000000;"></div>
<div style="left:1446px;top:620px;width:6px;height:10px;background:#aaaaaa;border:1px solid #000;box-sizing:border-box;"></div>
<div style="left:1457px;top:613px;width:1px;height:23px;background:#000000;"></div>
<div style="left:1458px;top:613px;width:1px;height:23px;background:#ffffff;"></div>
<div class="t" style="left:1469px;top:619px;font-weight:normal;font-size:12px;line-height:12px;color:#000000;letter-spacing:0.80px;-webkit-text-stroke:0.25px currentColor;">Definition Browser</div>
<div style="left:1439px;top:637px;width:481px;height:369px;background:#aaaaaa;"></div>
<div style="left:1442px;top:637px;width:1px;height:359px;background:#000000;"></div>
<div style="left:1443px;top:637px;width:473px;height:359px;background:repeating-conic-gradient(#6688bb 0 25%,#aaaaaa 0 50%) 0 0/2px 2px;"></div>
<div style="left:1916px;top:637px;width:1px;height:359px;background:#ffffff;"></div>
<div style="left:1442px;top:996px;width:475px;height:1px;background:#ffffff;"></div>
<div style="left:1919px;top:637px;width:1px;height:369px;background:#000000;"></div>
<div style="left:1439px;top:1005px;width:481px;height:1px;background:#000000;"></div>
<div style="left:1902px;top:996px;width:17px;height:9px;background:#aaaaaa;"></div>
<div style="left:1902px;top:996px;width:17px;height:1px;background:#ffffff;"></div>
<div style="left:1902px;top:996px;width:1px;height:9px;background:#ffffff;"></div>
<div style="left:1902px;top:1004px;width:17px;height:1px;background:#000000;"></div>
<div style="left:1918px;top:996px;width:1px;height:9px;background:#000000;"></div>
<svg style="position:absolute;left:1902px;top:996px" width="17" height="9" viewBox="0 0 17 9"><polygon points="14,2 14,7 3,7" fill="none" stroke="#000" stroke-width="1"/></svg>
<div style="left:1450px;top:643px;width:403px;height:18px;background:#aaaaaa;"></div>
<div style="left:1450px;top:643px;width:403px;height:1px;background:#ffffff;"></div>
<div style="left:1450px;top:643px;width:1px;height:18px;background:#ffffff;"></div>
<div style="left:1450px;top:660px;width:403px;height:1px;background:#000000;"></div>
<div style="left:1852px;top:643px;width:1px;height:18px;background:#000000;"></div>
<div style="left:1451px;top:644px;width:401px;height:1px;background:#000000;"></div>
<div style="left:1451px;top:644px;width:1px;height:16px;background:#000000;"></div>
<div style="left:1451px;top:659px;width:401px;height:1px;background:#ffffff;"></div>
<div style="left:1851px;top:644px;width:1px;height:16px;background:#ffffff;"></div>
<div style="left:1854px;top:643px;width:55px;height:18px;background:#aaaaaa;"></div>
<div style="left:1854px;top:643px;width:55px;height:1px;background:#ffffff;"></div>
<div style="left:1854px;top:643px;width:1px;height:18px;background:#ffffff;"></div>
<div style="left:1854px;top:660px;width:55px;height:1px;background:#000000;"></div>
<div style="left:1908px;top:643px;width:1px;height:18px;background:#000000;"></div>
<div class="t" style="left:1860px;top:646px;font-weight:normal;font-size:12px;line-height:12px;color:#000000;letter-spacing:0.80px;-webkit-text-stroke:0.25px currentColor;">Reset</div>
<div style="left:1449px;top:671px;width:153px;height:16px;background:#6688bb;"></div>
<div style="left:1449px;top:671px;width:153px;height:1px;background:#000000;"></div>
<div style="left:1449px;top:671px;width:1px;height:16px;background:#000000;"></div>
<div style="left:1449px;top:686px;width:153px;height:1px;background:#ffffff;"></div>
<div style="left:1601px;top:671px;width:1px;height:16px;background:#ffffff;"></div>
<div class="t" style="left:1506px;top:674px;font-weight:normal;font-size:12px;line-height:12px;color:#000000;letter-spacing:0.80px;-webkit-text-stroke:0.25px currentColor;">CONST</div>
<div style="left:1602px;top:671px;width:154px;height:16px;background:#aaaaaa;"></div>
<div style="left:1602px;top:671px;width:154px;height:1px;background:#ffffff;"></div>
<div style="left:1602px;top:671px;width:1px;height:16px;background:#ffffff;"></div>
<div style="left:1602px;top:686px;width:154px;height:1px;background:#000000;"></div>
<div style="left:1755px;top:671px;width:1px;height:16px;background:#000000;"></div>
<div class="t" style="left:1667px;top:674px;font-weight:normal;font-size:12px;line-height:12px;color:#000000;letter-spacing:0.80px;-webkit-text-stroke:0.25px currentColor;">VAR</div>
<div style="left:1756px;top:671px;width:154px;height:16px;background:#aaaaaa;"></div>
<div style="left:1756px;top:671px;width:154px;height:1px;background:#ffffff;"></div>
<div style="left:1756px;top:671px;width:1px;height:16px;background:#ffffff;"></div>
<div style="left:1756px;top:686px;width:154px;height:1px;background:#000000;"></div>
<div style="left:1909px;top:671px;width:1px;height:16px;background:#000000;"></div>
<div class="t" style="left:1809px;top:674px;font-weight:normal;font-size:12px;line-height:12px;color:#000000;letter-spacing:0.80px;-webkit-text-stroke:0.25px currentColor;">STRUCT</div>
<div style="left:1450px;top:688px;width:459px;height:17px;background:#aaaaaa;"></div>
<div style="left:1450px;top:688px;width:459px;height:1px;background:#ffffff;"></div>
<div style="left:1450px;top:688px;width:1px;height:17px;background:#ffffff;"></div>
<div style="left:1450px;top:704px;width:459px;height:1px;background:#000000;"></div>
<div style="left:1908px;top:688px;width:1px;height:17px;background:#000000;"></div>
<div class="t" style="left:1656px;top:691px;font-weight:normal;font-size:12px;line-height:12px;color:#000000;letter-spacing:0.80px;-webkit-text-stroke:0.25px currentColor;">Parent</div>
<div style="left:1654px;top:701px;width:9px;height:1px;background:#000000;"></div>
<div style="left:1450px;top:705px;width:294px;height:13px;background:#aaaaaa;"></div>
<div style="left:1450px;top:705px;width:294px;height:1px;background:#ffffff;"></div>
<div style="left:1450px;top:705px;width:1px;height:13px;background:#ffffff;"></div>
<div style="left:1450px;top:717px;width:294px;height:1px;background:#000000;"></div>
<div style="left:1743px;top:705px;width:1px;height:13px;background:#000000;"></div>
<div class="t" style="left:1455px;top:706px;font-weight:bold;font-size:12px;line-height:12px;color:#000000;letter-spacing:0.80px;-webkit-text-stroke:0.25px currentColor;">Identifier</div>
<div style="left:1744px;top:705px;width:148px;height:13px;background:#aaaaaa;"></div>
<div style="left:1744px;top:705px;width:148px;height:1px;background:#ffffff;"></div>
<div style="left:1744px;top:705px;width:1px;height:13px;background:#ffffff;"></div>
<div style="left:1744px;top:717px;width:148px;height:1px;background:#000000;"></div>
<div style="left:1891px;top:705px;width:1px;height:13px;background:#000000;"></div>
<div class="t" style="left:1747px;top:706px;font-weight:bold;font-size:12px;line-height:12px;color:#000000;letter-spacing:0.80px;-webkit-text-stroke:0.25px currentColor;">Value</div>
<div style="left:1450px;top:718px;width:442px;height:255px;background:#aaaaaa;"></div>
<div style="left:1450px;top:718px;width:1px;height:255px;background:#ffffff;"></div>
<div style="left:1450px;top:972px;width:442px;height:1px;background:#000000;"></div>
<div style="left:1743px;top:718px;width:1px;height:254px;background:repeating-linear-gradient(#000 0 1px,transparent 1px 2px);"></div>
<div style="left:1891px;top:705px;width:18px;height:268px;background:#aaaaaa;"></div>
<div style="left:1892px;top:705px;width:17px;height:16px;background:#aaaaaa;"></div>
<div style="left:1892px;top:705px;width:17px;height:1px;background:#ffffff;"></div>
<div style="left:1892px;top:705px;width:1px;height:16px;background:#ffffff;"></div>
<div style="left:1892px;top:720px;width:17px;height:1px;background:#000000;"></div>
<div style="left:1908px;top:705px;width:1px;height:16px;background:#000000;"></div>
<svg style="position:absolute;left:1892px;top:705px" width="17" height="16"><polyline points="3.4,14 8.5,2 13.6,14" fill="none" stroke="#000" stroke-width="1"/></svg>
<div style="left:1892px;top:721px;width:1px;height:237px;background:#ffffff;"></div>
<div style="left:1908px;top:721px;width:1px;height:237px;background:#000000;"></div>
<div style="left:1895px;top:722px;width:11px;height:236px;background:#ffffff;"></div>
<div style="left:1895px;top:722px;width:11px;height:1px;background:#ffffff;"></div>
<div style="left:1895px;top:722px;width:1px;height:236px;background:#ffffff;"></div>
<div style="left:1895px;top:957px;width:11px;height:1px;background:#000000;"></div>
<div style="left:1905px;top:722px;width:1px;height:236px;background:#000000;"></div>
<div style="left:1892px;top:958px;width:17px;height:15px;background:#aaaaaa;"></div>
<div style="left:1892px;top:958px;width:17px;height:1px;background:#ffffff;"></div>
<div style="left:1892px;top:958px;width:1px;height:15px;background:#ffffff;"></div>
<div style="left:1892px;top:972px;width:17px;height:1px;background:#000000;"></div>
<div style="left:1908px;top:958px;width:1px;height:15px;background:#000000;"></div>
<svg style="position:absolute;left:1892px;top:958px" width="17" height="15"><polyline points="3.4,2 8.5,13 13.6,2" fill="none" stroke="#000" stroke-width="1"/></svg>
<div style="left:1450px;top:973px;width:356px;height:17px;background:#aaaaaa;"></div>
<div style="left:1450px;top:973px;width:356px;height:1px;background:#ffffff;"></div>
<div style="left:1450px;top:973px;width:1px;height:17px;background:#ffffff;"></div>
<div style="left:1450px;top:989px;width:356px;height:1px;background:#000000;"></div>
<div style="left:1805px;top:973px;width:1px;height:17px;background:#000000;"></div>
<div style="left:1806px;top:973px;width:103px;height:17px;background:#aaaaaa;"></div>
<div style="left:1806px;top:973px;width:103px;height:1px;background:#ffffff;"></div>
<div style="left:1806px;top:973px;width:1px;height:17px;background:#ffffff;"></div>
<div style="left:1806px;top:989px;width:103px;height:1px;background:#000000;"></div>
<div style="left:1908px;top:973px;width:1px;height:17px;background:#000000;"></div>
<div class="t" style="left:1812px;top:977px;font-weight:bold;font-size:12px;line-height:12px;color:#000000;letter-spacing:0.80px;-webkit-text-stroke:0.25px currentColor;">Add to Code</div>
<div style="left:0px;top:758px;width:719px;height:1px;background:#000000;"></div>
<div style="left:0px;top:759px;width:719px;height:23px;background:#aaaaaa;"></div>
<div style="left:0px;top:759px;width:719px;height:1px;background:#ffffff;"></div>
<div style="left:0px;top:782px;width:719px;height:1px;background:#000000;"></div>
<div style="left:672px;top:759px;width:1px;height:23px;background:#000000;"></div>
<div style="left:673px;top:759px;width:1px;height:23px;background:#ffffff;"></div>
<div style="left:678px;top:764px;width:13px;height:14px;background:#aaaaaa;border:1px solid #000;box-sizing:border-box;"></div>
<div style="left:679px;top:765px;width:5px;height:7px;background:#aaaaaa;border-right:2px solid #000;border-bottom:1px solid #000;box-sizing:border-box;"></div>
<div style="left:695px;top:759px;width:1px;height:23px;background:#000000;"></div>
<div style="left:696px;top:759px;width:1px;height:23px;background:#ffffff;"></div>
<div style="left:700px;top:764px;width:11px;height:10px;background:#aaaaaa;border:1px solid #000;box-sizing:border-box;"></div>
<div style="left:704px;top:768px;width:11px;height:10px;background:#aaaaaa;border:1px solid #000;box-sizing:border-box;"></div>
<div style="left:718px;top:758px;width:1px;height:25px;background:#000000;"></div>
<div style="left:7px;top:766px;width:6px;height:10px;background:#aaaaaa;border:1px solid #000;box-sizing:border-box;"></div>
<div style="left:18px;top:759px;width:1px;height:23px;background:#000000;"></div>
<div style="left:19px;top:759px;width:1px;height:23px;background:#ffffff;"></div>
<div class="t" style="left:31px;top:765px;font-weight:normal;font-size:12px;line-height:12px;color:#000000;letter-spacing:0.80px;-webkit-text-stroke:0.25px currentColor;">Instruction Browser</div>
<div style="left:0px;top:783px;width:719px;height:223px;background:#aaaaaa;"></div>
<div style="left:3px;top:783px;width:1px;height:213px;background:#000000;"></div>
<div style="left:4px;top:783px;width:711px;height:213px;background:repeating-conic-gradient(#6688bb 0 25%,#aaaaaa 0 50%) 0 0/2px 2px;"></div>
<div style="left:715px;top:783px;width:1px;height:213px;background:#ffffff;"></div>
<div style="left:3px;top:996px;width:713px;height:1px;background:#ffffff;"></div>
<div style="left:718px;top:783px;width:1px;height:223px;background:#000000;"></div>
<div style="left:0px;top:1005px;width:719px;height:1px;background:#000000;"></div>
<div style="left:701px;top:996px;width:17px;height:9px;background:#aaaaaa;"></div>
<div style="left:701px;top:996px;width:17px;height:1px;background:#ffffff;"></div>
<div style="left:701px;top:996px;width:1px;height:9px;background:#ffffff;"></div>
<div style="left:701px;top:1004px;width:17px;height:1px;background:#000000;"></div>
<div style="left:717px;top:996px;width:1px;height:9px;background:#000000;"></div>
<svg style="position:absolute;left:701px;top:996px" width="17" height="9" viewBox="0 0 17 9"><polygon points="14,2 14,7 3,7" fill="none" stroke="#000" stroke-width="1"/></svg>
<div style="left:0px;top:783px;width:1px;height:223px;background:#cfcfcf;"></div>
<div style="left:11px;top:789px;width:172px;height:15px;background:#aaaaaa;"></div>
<div style="left:11px;top:789px;width:172px;height:1px;background:#ffffff;"></div>
<div style="left:11px;top:789px;width:1px;height:15px;background:#ffffff;"></div>
<div style="left:11px;top:803px;width:172px;height:1px;background:#000000;"></div>
<div style="left:182px;top:789px;width:1px;height:15px;background:#000000;"></div>
<div class="t" style="left:53px;top:791px;font-weight:normal;font-size:12px;line-height:12px;color:#000000;letter-spacing:0.80px;-webkit-text-stroke:0.25px currentColor;">Add to Code</div>
<div style="left:187px;top:789px;width:173px;height:15px;background:#aaaaaa;"></div>
<div style="left:187px;top:789px;width:173px;height:1px;background:#ffffff;"></div>
<div style="left:187px;top:789px;width:1px;height:15px;background:#ffffff;"></div>
<div style="left:187px;top:803px;width:173px;height:1px;background:#000000;"></div>
<div style="left:359px;top:789px;width:1px;height:15px;background:#000000;"></div>
<div class="t" style="left:250px;top:791px;font-weight:normal;font-size:12px;line-height:12px;color:#000000;letter-spacing:0.80px;-webkit-text-stroke:0.25px currentColor;">Macros</div>
<div style="left:362px;top:789px;width:172px;height:15px;background:#6688bb;"></div>
<div style="left:362px;top:789px;width:172px;height:1px;background:#000000;"></div>
<div style="left:362px;top:789px;width:1px;height:15px;background:#000000;"></div>
<div style="left:362px;top:803px;width:172px;height:1px;background:#ffffff;"></div>
<div style="left:533px;top:789px;width:1px;height:15px;background:#ffffff;"></div>
<div class="t" style="left:400px;top:791px;font-weight:normal;font-size:12px;line-height:12px;color:#000000;letter-spacing:0.80px;-webkit-text-stroke:0.25px currentColor;">Instructions</div>
<div style="left:536px;top:789px;width:173px;height:15px;background:#aaaaaa;"></div>
<div style="left:536px;top:789px;width:173px;height:1px;background:#ffffff;"></div>
<div style="left:536px;top:789px;width:1px;height:15px;background:#ffffff;"></div>
<div style="left:536px;top:803px;width:173px;height:1px;background:#000000;"></div>
<div style="left:708px;top:789px;width:1px;height:15px;background:#000000;"></div>
<div class="t" style="left:554px;top:791px;font-weight:normal;font-size:12px;line-height:12px;color:#000000;letter-spacing:0.80px;-webkit-text-stroke:0.25px currentColor;">Include functions</div>
<div style="left:11px;top:806px;width:698px;height:17px;background:#aaaaaa;"></div>
<div style="left:11px;top:806px;width:698px;height:1px;background:#ffffff;"></div>
<div style="left:11px;top:806px;width:1px;height:17px;background:#ffffff;"></div>
<div style="left:11px;top:822px;width:698px;height:1px;background:#000000;"></div>
<div style="left:708px;top:806px;width:1px;height:17px;background:#000000;"></div>
<div style="left:12px;top:807px;width:696px;height:1px;background:#000000;"></div>
<div style="left:12px;top:807px;width:1px;height:15px;background:#000000;"></div>
<div style="left:12px;top:821px;width:696px;height:1px;background:#ffffff;"></div>
<div style="left:707px;top:807px;width:1px;height:15px;background:#ffffff;"></div>
<div style="left:13px;top:808px;width:1px;height:13px;background:#000000;"></div>
<div style="left:11px;top:825px;width:272px;height:11px;background:#6688bb;"></div>
<div style="left:11px;top:825px;width:1px;height:11px;background:#ffffff;"></div>
<div style="left:11px;top:836px;width:272px;height:1px;background:#000000;"></div>
<div style="left:282px;top:825px;width:1px;height:12px;background:#000000;"></div>
<div class="t" style="left:14px;top:826px;font-weight:bold;font-size:12px;line-height:12px;color:#ffffff;letter-spacing:0.80px;-webkit-text-stroke:0.25px currentColor;">Function</div>
<div style="left:284px;top:825px;width:407px;height:11px;background:#6688bb;"></div>
<div style="left:283px;top:825px;width:1px;height:12px;background:#ffffff;"></div>
<div style="left:283px;top:836px;width:408px;height:1px;background:#000000;"></div>
<div class="t" style="left:287px;top:826px;font-weight:bold;font-size:12px;line-height:12px;color:#ffffff;letter-spacing:0.80px;-webkit-text-stroke:0.25px currentColor;">Syntax</div>
<div style="left:11px;top:837px;width:680px;height:135px;background:#aaaaaa;"></div>
<div style="left:11px;top:837px;width:1px;height:135px;background:#ffffff;"></div>
<div style="left:11px;top:971px;width:680px;height:1px;background:#000000;"></div>
<div style="left:282px;top:837px;width:1px;height:134px;background:repeating-linear-gradient(#000 0 1px,transparent 1px 2px);"></div>
<div style="left:691px;top:824px;width:18px;height:149px;background:#aaaaaa;"></div>
<div style="left:692px;top:825px;width:17px;height:17px;background:#aaaaaa;"></div>
<div style="left:692px;top:825px;width:17px;height:1px;background:#ffffff;"></div>
<div style="left:692px;top:825px;width:1px;height:17px;background:#ffffff;"></div>
<div style="left:692px;top:841px;width:17px;height:1px;background:#000000;"></div>
<div style="left:708px;top:825px;width:1px;height:17px;background:#000000;"></div>
<svg style="position:absolute;left:692px;top:825px" width="17" height="17"><polyline points="3.4,15 8.5,2 13.6,15" fill="none" stroke="#000" stroke-width="1"/></svg>
<div style="left:692px;top:842px;width:1px;height:113px;background:#ffffff;"></div>
<div style="left:708px;top:842px;width:1px;height:113px;background:#000000;"></div>
<div style="left:694px;top:843px;width:11px;height:110px;background:#ffffff;"></div>
<div style="left:694px;top:843px;width:11px;height:1px;background:#ffffff;"></div>
<div style="left:694px;top:843px;width:1px;height:110px;background:#ffffff;"></div>
<div style="left:694px;top:952px;width:11px;height:1px;background:#000000;"></div>
<div style="left:704px;top:843px;width:1px;height:110px;background:#000000;"></div>
<div style="left:692px;top:955px;width:17px;height:17px;background:#aaaaaa;"></div>
<div style="left:692px;top:955px;width:17px;height:1px;background:#ffffff;"></div>
<div style="left:692px;top:955px;width:1px;height:17px;background:#ffffff;"></div>
<div style="left:692px;top:971px;width:17px;height:1px;background:#000000;"></div>
<div style="left:708px;top:955px;width:1px;height:17px;background:#000000;"></div>
<svg style="position:absolute;left:692px;top:955px" width="17" height="17"><polyline points="3.4,2 8.5,15 13.6,2" fill="none" stroke="#000" stroke-width="1"/></svg>
<div style="left:11px;top:973px;width:698px;height:17px;background:#aaaaaa;"></div>
<div style="left:11px;top:973px;width:698px;height:1px;background:#ffffff;"></div>
<div style="left:11px;top:973px;width:1px;height:17px;background:#ffffff;"></div>
<div style="left:11px;top:989px;width:698px;height:1px;background:#000000;"></div>
<div style="left:708px;top:973px;width:1px;height:17px;background:#000000;"></div>
<div style="left:719px;top:758px;width:720px;height:1px;background:#000000;"></div>
<div style="left:719px;top:759px;width:720px;height:23px;background:#aaaaaa;"></div>
<div style="left:719px;top:759px;width:720px;height:1px;background:#ffffff;"></div>
<div style="left:719px;top:782px;width:720px;height:1px;background:#000000;"></div>
<div style="left:1392px;top:759px;width:1px;height:23px;background:#000000;"></div>
<div style="left:1393px;top:759px;width:1px;height:23px;background:#ffffff;"></div>
<div style="left:1398px;top:764px;width:13px;height:14px;background:#aaaaaa;border:1px solid #000;box-sizing:border-box;"></div>
<div style="left:1399px;top:765px;width:5px;height:7px;background:#aaaaaa;border-right:2px solid #000;border-bottom:1px solid #000;box-sizing:border-box;"></div>
<div style="left:1415px;top:759px;width:1px;height:23px;background:#000000;"></div>
<div style="left:1416px;top:759px;width:1px;height:23px;background:#ffffff;"></div>
<div style="left:1420px;top:764px;width:11px;height:10px;background:#aaaaaa;border:1px solid #000;box-sizing:border-box;"></div>
<div style="left:1424px;top:768px;width:11px;height:10px;background:#aaaaaa;border:1px solid #000;box-sizing:border-box;"></div>
<div style="left:1438px;top:758px;width:1px;height:25px;background:#000000;"></div>
<div style="left:726px;top:766px;width:6px;height:10px;background:#aaaaaa;border:1px solid #000;box-sizing:border-box;"></div>
<div style="left:737px;top:759px;width:1px;height:23px;background:#000000;"></div>
<div style="left:738px;top:759px;width:1px;height:23px;background:#ffffff;"></div>
<div class="t" style="left:748px;top:765px;font-weight:normal;font-size:12px;line-height:12px;color:#000000;letter-spacing:0.80px;-webkit-text-stroke:0.25px currentColor;">Library Browser</div>
<div style="left:719px;top:783px;width:720px;height:223px;background:#aaaaaa;"></div>
<div style="left:722px;top:783px;width:1px;height:213px;background:#000000;"></div>
<div style="left:723px;top:783px;width:712px;height:213px;background:repeating-conic-gradient(#6688bb 0 25%,#aaaaaa 0 50%) 0 0/2px 2px;"></div>
<div style="left:1435px;top:783px;width:1px;height:213px;background:#ffffff;"></div>
<div style="left:722px;top:996px;width:714px;height:1px;background:#ffffff;"></div>
<div style="left:1438px;top:783px;width:1px;height:223px;background:#000000;"></div>
<div style="left:719px;top:1005px;width:720px;height:1px;background:#000000;"></div>
<div style="left:1421px;top:996px;width:17px;height:9px;background:#aaaaaa;"></div>
<div style="left:1421px;top:996px;width:17px;height:1px;background:#ffffff;"></div>
<div style="left:1421px;top:996px;width:1px;height:9px;background:#ffffff;"></div>
<div style="left:1421px;top:1004px;width:17px;height:1px;background:#000000;"></div>
<div style="left:1437px;top:996px;width:1px;height:9px;background:#000000;"></div>
<svg style="position:absolute;left:1421px;top:996px" width="17" height="9" viewBox="0 0 17 9"><polygon points="14,2 14,7 3,7" fill="none" stroke="#000" stroke-width="1"/></svg>
<div style="left:730px;top:789px;width:213px;height:167px;background:#aaaaaa;"></div>
<div style="left:730px;top:789px;width:213px;height:1px;background:#ffffff;"></div>
<div style="left:730px;top:789px;width:1px;height:167px;background:#ffffff;"></div>
<div style="left:942px;top:789px;width:1px;height:167px;background:#000000;"></div>
<div style="left:730px;top:955px;width:213px;height:1px;background:#000000;"></div>
<div style="left:731px;top:791px;width:211px;height:11px;background:#6688bb;"></div>
<div style="left:731px;top:790px;width:211px;height:1px;background:#000000;"></div>
<div style="left:731px;top:802px;width:211px;height:1px;background:#ffffff;"></div>
<div style="left:731px;top:790px;width:211px;height:165px;overflow:hidden">
<div class="t" style="left:2px;top:2px;font-weight:normal;font-size:12px;line-height:12px;letter-spacing:0.8px;-webkit-text-stroke:0.25px #000">AaronsIconLib.obj</div>
<div class="t" style="left:2px;top:14px;font-weight:normal;font-size:12px;line-height:12px;letter-spacing:0.8px;-webkit-text-stroke:0.25px #000">BDChunkyLib.obj</div>
<div class="t" style="left:2px;top:26px;font-weight:normal;font-size:12px;line-height:12px;letter-spacing:0.8px;-webkit-text-stroke:0.25px #000">BDGfxLib.obj</div>
<div class="t" style="left:2px;top:38px;font-weight:normal;font-size:12px;line-height:12px;letter-spacing:0.8px;-webkit-text-stroke:0.25px #000">Bitmaplib</div>
<div class="t" style="left:2px;top:50px;font-weight:normal;font-size:12px;line-height:12px;letter-spacing:0.8px;-webkit-text-stroke:0.25px #000">EFMUILib.obj</div>
<div class="t" style="left:2px;top:62px;font-weight:normal;font-size:12px;line-height:12px;letter-spacing:0.8px;-webkit-text-stroke:0.25px #000">EMLLib.obj</div>
<div class="t" style="left:2px;top:74px;font-weight:normal;font-size:12px;line-height:12px;letter-spacing:0.8px;-webkit-text-stroke:0.25px #000">ElmoreDosLib.obj</div>
<div class="t" style="left:2px;top:86px;font-weight:normal;font-size:12px;line-height:12px;letter-spacing:0.8px;-webkit-text-stroke:0.25px #000">ElmoreFuncsLib.obj</div>
<div class="t" style="left:2px;top:98px;font-weight:normal;font-size:12px;line-height:12px;letter-spacing:0.8px;-webkit-text-stroke:0.25px #000">ElmoreIncLib.obj</div>
<div class="t" style="left:2px;top:110px;font-weight:normal;font-size:12px;line-height:12px;letter-spacing:0.8px;-webkit-text-stroke:0.25px #000">ElmoreMathLib.obj</div>
<div class="t" style="left:2px;top:122px;font-weight:normal;font-size:12px;line-height:12px;letter-spacing:0.8px;-webkit-text-stroke:0.25px #000">ElmoreSysLib.obj</div>
<div class="t" style="left:2px;top:134px;font-weight:normal;font-size:12px;line-height:12px;letter-spacing:0.8px;-webkit-text-stroke:0.25px #000">Fadelib</div>
<div class="t" style="left:2px;top:146px;font-weight:normal;font-size:12px;line-height:12px;letter-spacing:0.8px;-webkit-text-stroke:0.25px #000">FileID.library1</div>
<div class="t" style="left:2px;top:158px;font-weight:normal;font-size:12px;line-height:12px;letter-spacing:0.8px;-webkit-text-stroke:0.25px #000">FuzziesRegLib.obj</div>
</div>
<div style="left:943px;top:789px;width:18px;height:167px;background:#aaaaaa;"></div>
<div style="left:944px;top:789px;width:1px;height:131px;background:#ffffff;"></div>
<div style="left:960px;top:789px;width:1px;height:131px;background:#000000;"></div>
<div style="left:947px;top:797px;width:10px;height:122px;background:repeating-conic-gradient(#aaaaaa 0 25%,#000000 0 50%) 0 0/2px 2px;"></div>
<div style="left:947px;top:791px;width:10px;height:8px;background:#ffffff;"></div>
<div style="left:947px;top:791px;width:10px;height:1px;background:#ffffff;"></div>
<div style="left:947px;top:791px;width:1px;height:8px;background:#ffffff;"></div>
<div style="left:947px;top:798px;width:10px;height:1px;background:#000000;"></div>
<div style="left:956px;top:791px;width:1px;height:8px;background:#000000;"></div>
<div style="left:944px;top:920px;width:16px;height:18px;background:#aaaaaa;"></div>
<div style="left:944px;top:920px;width:16px;height:1px;background:#ffffff;"></div>
<div style="left:944px;top:920px;width:1px;height:18px;background:#ffffff;"></div>
<div style="left:944px;top:937px;width:16px;height:1px;background:#000000;"></div>
<div style="left:959px;top:920px;width:1px;height:18px;background:#000000;"></div>
<svg style="position:absolute;left:944px;top:920px" width="16" height="18"><polyline points="3.2,16 8.0,2 12.8,16" fill="none" stroke="#000" stroke-width="1"/></svg>
<div style="left:944px;top:938px;width:16px;height:18px;background:#aaaaaa;"></div>
<div style="left:944px;top:938px;width:16px;height:1px;background:#ffffff;"></div>
<div style="left:944px;top:938px;width:1px;height:18px;background:#ffffff;"></div>
<div style="left:944px;top:955px;width:16px;height:1px;background:#000000;"></div>
<div style="left:959px;top:938px;width:1px;height:18px;background:#000000;"></div>
<svg style="position:absolute;left:944px;top:938px" width="16" height="18"><polyline points="3.2,2 8.0,16 12.8,2" fill="none" stroke="#000" stroke-width="1"/></svg>
<div style="left:730px;top:956px;width:231px;height:15px;background:#aaaaaa;"></div>
<div style="left:730px;top:956px;width:231px;height:1px;background:#ffffff;"></div>
<div style="left:730px;top:956px;width:1px;height:15px;background:#ffffff;"></div>
<div style="left:730px;top:970px;width:231px;height:1px;background:#000000;"></div>
<div style="left:960px;top:956px;width:1px;height:15px;background:#000000;"></div>
<div style="left:749px;top:958px;width:1px;height:11px;background:#000000;"></div>
<div style="left:750px;top:958px;width:1px;height:11px;background:#ffffff;"></div>
<svg style="position:absolute;left:734px;top:956px" width="15" height="14" viewBox="0 0 15 14"><path d="M8.5,3 H4 Q2.5,3 2.5,4.5 V9.5 Q2.5,11 4,11 H8.5" fill="none" stroke="#000" stroke-width="2"/><polygon points="6,5.5 12,5.5 9,8.5" fill="#000"/></svg>
<div class="t" style="left:806px;top:959px;font-weight:normal;font-size:12px;line-height:12px;color:#000000;letter-spacing:0.80px;-webkit-text-stroke:0.25px currentColor;">sort by Name</div>
<div style="left:966px;top:789px;width:463px;height:167px;background:#aaaaaa;"></div>
<div style="left:966px;top:789px;width:463px;height:1px;background:#ffffff;"></div>
<div style="left:966px;top:789px;width:1px;height:167px;background:#ffffff;"></div>
<div style="left:966px;top:955px;width:463px;height:1px;background:#000000;"></div>
<div style="left:967px;top:790px;width:177px;height:11px;background:#6688bb;"></div>
<div style="left:1143px;top:790px;width:1px;height:12px;background:#000000;"></div>
<div style="left:967px;top:801px;width:177px;height:1px;background:#000000;"></div>
<div style="left:1145px;top:790px;width:266px;height:11px;background:#6688bb;"></div>
<div style="left:1144px;top:790px;width:1px;height:12px;background:#ffffff;"></div>
<div style="left:1145px;top:801px;width:266px;height:1px;background:#000000;"></div>
<div class="t" style="left:971px;top:790px;font-weight:bold;font-size:12px;line-height:12px;color:#ffffff;letter-spacing:0.80px;-webkit-text-stroke:0.25px currentColor;">Function</div>
<div class="t" style="left:1148px;top:790px;font-weight:bold;font-size:12px;line-height:12px;color:#ffffff;letter-spacing:0.80px;-webkit-text-stroke:0.25px currentColor;">Syntax</div>
<div style="left:1144px;top:803px;width:1px;height:152px;background:repeating-linear-gradient(#000 0 1px,transparent 1px 2px);"></div>
<div class="t" style="left:970px;top:803px;font-weight:normal;font-size:12px;line-height:12px;color:#000000;letter-spacing:0.80px;-webkit-text-stroke:0.25px currentColor;">GetIconInfo</div>
<div class="t" style="left:970px;top:816px;font-weight:normal;font-size:12px;line-height:12px;color:#000000;letter-spacing:0.80px;-webkit-text-stroke:0.25px currentColor;">IconDefTool$</div>
<div class="t" style="left:970px;top:829px;font-weight:normal;font-size:12px;line-height:12px;color:#000000;letter-spacing:0.80px;-webkit-text-stroke:0.25px currentColor;">IconInfo</div>
<div class="t" style="left:970px;top:842px;font-weight:normal;font-size:12px;line-height:12px;color:#000000;letter-spacing:0.80px;-webkit-text-stroke:0.25px currentColor;">IconStack</div>
<div class="t" style="left:970px;top:855px;font-weight:normal;font-size:12px;line-height:12px;color:#000000;letter-spacing:0.80px;-webkit-text-stroke:0.25px currentColor;">IconSubTool$</div>
<div class="t" style="left:970px;top:868px;font-weight:normal;font-size:12px;line-height:12px;color:#000000;letter-spacing:0.80px;-webkit-text-stroke:0.25px currentColor;">IconTool$</div>
<div class="t" style="left:970px;top:881px;font-weight:normal;font-size:12px;line-height:12px;color:#000000;letter-spacing:0.80px;-webkit-text-stroke:0.25px currentColor;">IconType</div>
<div class="t" style="left:1163px;top:803px;font-weight:normal;font-size:12px;line-height:12px;color:#000000;letter-spacing:0.80px;-webkit-text-stroke:0.25px currentColor;">success.w=GetIconInfo(Info#,fi</div>
<div class="t" style="left:1163px;top:816px;font-weight:normal;font-size:12px;line-height:12px;color:#000000;letter-spacing:0.80px;-webkit-text-stroke:0.25px currentColor;">deftool$=IconDefTool$(Info#)</div>
<div class="t" style="left:1163px;top:842px;font-weight:normal;font-size:12px;line-height:12px;color:#000000;letter-spacing:0.80px;-webkit-text-stroke:0.25px currentColor;">stackSize.l=IconType(Info#)  R</div>
<div class="t" style="left:1163px;top:855px;font-weight:normal;font-size:12px;line-height:12px;color:#000000;letter-spacing:0.80px;-webkit-text-stroke:0.25px currentColor;">boolean.w=IconSubTool$(type$,s</div>
<div class="t" style="left:1163px;top:868px;font-weight:normal;font-size:12px;line-height:12px;color:#000000;letter-spacing:0.80px;-webkit-text-stroke:0.25px currentColor;">tool$=IconTool$(Info#,type$)</div>
<div class="t" style="left:1163px;top:881px;font-weight:normal;font-size:12px;line-height:12px;color:#000000;letter-spacing:0.80px;-webkit-text-stroke:0.25px currentColor;">type.w=IconType(Info#)  Return</div>
<div style="left:1411px;top:789px;width:18px;height:167px;background:#aaaaaa;"></div>
<div style="left:1412px;top:790px;width:17px;height:17px;background:#aaaaaa;"></div>
<div style="left:1412px;top:790px;width:17px;height:1px;background:#ffffff;"></div>
<div style="left:1412px;top:790px;width:1px;height:17px;background:#ffffff;"></div>
<div style="left:1412px;top:806px;width:17px;height:1px;background:#000000;"></div>
<div style="left:1428px;top:790px;width:1px;height:17px;background:#000000;"></div>
<svg style="position:absolute;left:1412px;top:790px" width="17" height="17"><polyline points="3.4,15 8.5,2 13.6,15" fill="none" stroke="#000" stroke-width="1"/></svg>
<div style="left:1412px;top:807px;width:1px;height:131px;background:#ffffff;"></div>
<div style="left:1428px;top:807px;width:1px;height:131px;background:#000000;"></div>
<div style="left:1414px;top:808px;width:11px;height:129px;background:#ffffff;"></div>
<div style="left:1414px;top:808px;width:11px;height:1px;background:#ffffff;"></div>
<div style="left:1414px;top:808px;width:1px;height:129px;background:#ffffff;"></div>
<div style="left:1414px;top:936px;width:11px;height:1px;background:#000000;"></div>
<div style="left:1424px;top:808px;width:1px;height:129px;background:#000000;"></div>
<div style="left:1412px;top:938px;width:17px;height:18px;background:#aaaaaa;"></div>
<div style="left:1412px;top:938px;width:17px;height:1px;background:#ffffff;"></div>
<div style="left:1412px;top:938px;width:1px;height:18px;background:#ffffff;"></div>
<div style="left:1412px;top:955px;width:17px;height:1px;background:#000000;"></div>
<div style="left:1428px;top:938px;width:1px;height:18px;background:#000000;"></div>
<svg style="position:absolute;left:1412px;top:938px" width="17" height="18"><polyline points="3.4,2 8.5,16 13.6,2" fill="none" stroke="#000" stroke-width="1"/></svg>
<div style="left:966px;top:956px;width:463px;height:15px;background:#aaaaaa;"></div>
<div style="left:966px;top:956px;width:463px;height:1px;background:#ffffff;"></div>
<div style="left:966px;top:956px;width:1px;height:15px;background:#ffffff;"></div>
<div style="left:966px;top:970px;width:463px;height:1px;background:#000000;"></div>
<div style="left:1428px;top:956px;width:1px;height:15px;background:#000000;"></div>
<div class="t" style="left:971px;top:959px;font-weight:normal;font-size:12px;line-height:12px;color:#000000;letter-spacing:0.80px;-webkit-text-stroke:0.25px currentColor;">Library: AaronsIconLib.obj (LibNr. 62)</div>
<div style="left:730px;top:975px;width:576px;height:15px;background:#aaaaaa;"></div>
<div style="left:730px;top:975px;width:576px;height:1px;background:#ffffff;"></div>
<div style="left:730px;top:975px;width:1px;height:15px;background:#ffffff;"></div>
<div style="left:730px;top:989px;width:576px;height:1px;background:#000000;"></div>
<div style="left:1305px;top:975px;width:1px;height:15px;background:#000000;"></div>
<div class="t" style="left:934px;top:977px;font-weight:normal;font-size:12px;line-height:12px;color:#000000;letter-spacing:0.80px;-webkit-text-stroke:0.25px currentColor;">Check Lib consistency</div>
<div style="left:1309px;top:975px;width:120px;height:15px;background:#aaaaaa;"></div>
<div style="left:1309px;top:975px;width:120px;height:1px;background:#ffffff;"></div>
<div style="left:1309px;top:975px;width:1px;height:15px;background:#ffffff;"></div>
<div style="left:1309px;top:989px;width:120px;height:1px;background:#000000;"></div>
<div style="left:1428px;top:975px;width:1px;height:15px;background:#000000;"></div>
<div class="t" style="left:1317px;top:977px;font-weight:normal;font-size:12px;line-height:12px;color:#000000;letter-spacing:0.80px;-webkit-text-stroke:0.25px currentColor;">Show free IDs</div>
<div class="c" style="left:14px;top:730px;font-weight:bold">dbl_Voxels</div>
<div style="left:115px;top:728px;width:1px;height:11px;background:repeating-linear-gradient(#000 0 1px,transparent 1px 2px);"></div>
<div class="c" style="left:1177px;top:729px;color:#ffffff;font-weight:bold">Line: 000003 Column: 001</div>
<div class="c" style="left:1127px;top:738px;color:#ffffff;font-weight:bold">CHIP 1,975kb | FAST 544,862kb</div>
<svg style="position:absolute;left:1422px;top:727px" width="16" height="11" viewBox="0 0 16 11"><polyline points="3,8 8,3 13,8" fill="none" stroke="#000" stroke-width="2"/></svg>
<svg style="position:absolute;left:1422px;top:738px" width="16" height="11" viewBox="0 0 16 11"><polyline points="3,3 8,8 13,3" fill="none" stroke="#000" stroke-width="2"/></svg>
<svg style="position:absolute;left:1389px;top:749px" width="16" height="9" viewBox="0 0 16 9"><polyline points="11,1.5 5,4.5 11,7.5" fill="none" stroke="#000" stroke-width="1.6"/></svg>
<svg style="position:absolute;left:1405px;top:749px" width="16" height="9" viewBox="0 0 16 9"><polyline points="5,1.5 11,4.5 5,7.5" fill="none" stroke="#000" stroke-width="1.6"/></svg>
<svg style="position:absolute;left:1421px;top:749px" width="17" height="9" viewBox="0 0 17 9"><polygon points="14,2 14,7 3,7" fill="none" stroke="#000" stroke-width="1"/></svg>
<div style="left:1897px;top:0px;width:23px;height:23px;background:#aaaaaa;"></div>
<div style="left:1897px;top:0px;width:1px;height:23px;background:#ffffff;"></div>
<div style="left:1919px;top:0px;width:1px;height:23px;background:#000000;"></div>
<div style="left:1901px;top:5px;width:11px;height:10px;background:#aaaaaa;border:1px solid #000;box-sizing:border-box;"></div>
<div style="left:1905px;top:9px;width:11px;height:10px;background:#ffffff;border:1px solid #000;box-sizing:border-box;"></div>
<div style="left:535px;top:1006px;width:851px;height:74px;background:#aaaaaa;"></div>
<div style="left:535px;top:1006px;width:850px;height:1px;background:#ffffff;"></div>
<div style="left:535px;top:1006px;width:1px;height:73px;background:#ffffff;"></div>
<div style="left:535px;top:1079px;width:851px;height:1px;background:#000000;"></div>
<div style="left:1385px;top:1006px;width:1px;height:74px;background:#000000;"></div>
<svg style="position:absolute;left:547px;top:1023px" width="36" height="40" viewBox="0 0 36 40"><defs><pattern id="dg" width="3" height="3" patternUnits="userSpaceOnUse"><rect width="3" height="3" fill="#c8c8c8"/><circle cx="1.5" cy="1.5" r="0.8" fill="#e8e8e8"/></pattern><linearGradient id="lg1" x1="0" y1="0" x2="1" y2="1"><stop offset="0.35" stop-color="#e6e6e6"/><stop offset="0.6" stop-color="#c0c0c0"/></linearGradient></defs><rect x="0.5" y="0.5" width="34" height="38" fill="#4f7fb8" stroke="#3a6498"/><rect x="3" y="8" width="29" height="28" fill="url(#lg1)"/><rect x="3" y="8" width="29" height="1" fill="#3a6498"/><rect x="3" y="2.5" width="2" height="2" fill="#ccd"/><rect x="30" y="2.5" width="2" height="2" fill="#ccd"/><text x="4" y="15" font-family="Liberation Mono" font-weight="bold" font-size="8" fill="#222">1&gt;</text><rect x="13" y="9.5" width="5" height="6" fill="#ff7700"/></svg>
<svg style="position:absolute;left:596px;top:1022px" width="44" height="44" viewBox="0 0 44 44"><line x1="25" y1="24" x2="39" y2="38" stroke="#222" stroke-width="5"/><line x1="26" y1="25" x2="38" y2="37" stroke="#b04a55" stroke-width="3"/><line x1="23" y1="22" x2="27" y2="26" stroke="#eee" stroke-width="3"/><circle cx="15" cy="14" r="11.5" fill="#e4e4e4" stroke="#1a1a1a" stroke-width="2"/><circle cx="15" cy="14" r="8" fill="none" stroke="#f4f4f4" stroke-width="1" stroke-dasharray="2 2"/></svg>
<svg style="position:absolute;left:654px;top:1026px" width="40" height="38" viewBox="0 0 40 38"><rect x="1" y="2" width="30" height="34" fill="#5a8ccc"/><rect x="1" y="5" width="30" height="1" fill="#3e6aa8"/><rect x="1" y="8" width="30" height="1" fill="#3e6aa8"/><rect x="1" y="11" width="30" height="1" fill="#3e6aa8"/><rect x="1" y="14" width="30" height="1" fill="#3e6aa8"/><rect x="1" y="17" width="30" height="1" fill="#3e6aa8"/><rect x="1" y="20" width="30" height="1" fill="#3e6aa8"/><rect x="1" y="23" width="30" height="1" fill="#3e6aa8"/><rect x="1" y="26" width="30" height="1" fill="#3e6aa8"/><rect x="1" y="29" width="30" height="1" fill="#3e6aa8"/><rect x="1" y="32" width="30" height="1" fill="#3e6aa8"/><rect x="2.0" y="0" width="1.2" height="3" fill="#eee"/><rect x="4.6" y="0" width="1.2" height="3" fill="#eee"/><rect x="7.2" y="0" width="1.2" height="3" fill="#eee"/><rect x="9.8" y="0" width="1.2" height="3" fill="#eee"/><rect x="12.4" y="0" width="1.2" height="3" fill="#eee"/><rect x="15.0" y="0" width="1.2" height="3" fill="#eee"/><rect x="17.6" y="0" width="1.2" height="3" fill="#eee"/><rect x="20.2" y="0" width="1.2" height="3" fill="#eee"/><rect x="22.8" y="0" width="1.2" height="3" fill="#eee"/><rect x="25.4" y="0" width="1.2" height="3" fill="#eee"/><rect x="28.0" y="0" width="1.2" height="3" fill="#eee"/><rect x="30.6" y="0" width="1.2" height="3" fill="#eee"/><line x1="9" y1="32" x2="33" y2="8" stroke="#6b4a10" stroke-width="5.5"/><line x1="9" y1="32" x2="33" y2="8" stroke="#ffcc00" stroke-width="4"/><line x1="30" y1="11" x2="34" y2="7" stroke="#c05050" stroke-width="4"/><line x1="29" y1="12" x2="30.5" y2="10.5" stroke="#eee" stroke-width="4"/><polygon points="6,36 8,30 12,34" fill="#c08040"/><polygon points="6,36 7,33 9,35" fill="#222"/></svg>
<svg style="position:absolute;left:698px;top:1031px" width="57" height="24" viewBox="0 0 57 24"><rect x="2" y="2" width="55" height="22" fill="#000"/><rect x="0.5" y="0.5" width="53" height="21" fill="#fff" stroke="#000" stroke-width="1"/><text x="4" y="19" font-family="Liberation Serif" font-weight="bold" font-size="19" fill="#000">A</text><circle cx="18" cy="6" r="2.5" fill="#c8c8c8"/><text x="22" y="13" font-family="Liberation Serif" font-style="italic" font-weight="bold" font-size="12" fill="#000">Web</text><polyline points="23,18 26,15 29,18 32,15 35,18 38,15 41,18 44,15 47,18 49,16" fill="none" stroke="#5a8ad0" stroke-width="1.5"/></svg>
<svg style="position:absolute;left:763px;top:1023px" width="40" height="40" viewBox="0 0 40 40"><defs><clipPath id="gc"><circle cx="19" cy="20" r="18"/></clipPath><pattern id="gp" width="3" height="3" patternUnits="userSpaceOnUse"><rect width="3" height="3" fill="#3f7fbf"/><rect width="1" height="1" fill="#7fb0e0"/><rect x="2" y="1" width="1" height="1" fill="#2a5a9a"/></pattern></defs><circle cx="19" cy="20" r="18" fill="#3c3c3c"/><g clip-path="url(#gc)"><path d="M0,0 H40 V8 Q30,14 24,22 Q16,30 8,38 H0 Z" fill="url(#gp)"/><path d="M8,4 Q18,0 28,4 L26,16 Q20,22 14,26 Q10,18 8,4 Z" fill="#2e8a2e"/><rect x="14" y="8" width="2" height="2" fill="#b03030"/><rect x="20" y="13" width="2" height="2" fill="#b03030"/><rect x="16" y="18" width="2" height="2" fill="#b03030"/><rect x="24" y="10" width="1" height="1" fill="#d0d030"/><rect x="12" y="14" width="1" height="1" fill="#d0d030"/></g><rect x="21" y="3" width="4" height="14" fill="#d8d8d8"/><path d="M26,3 H31 Q35,3 35,7 Q35,9.5 33,10 Q36,11 36,13.5 Q36,17 32,17 H26 Z" fill="#e4e4e4"/><path d="M28,6 H31 Q32,6 32,7.5 Q32,9 31,9 H28 Z M28,12 H31.5 Q33,12 33,13.5 Q33,15 31.5,15 H28 Z" fill="#3f7fbf"/></svg>
<svg style="position:absolute;left:813px;top:1023px" width="41" height="41" viewBox="0 0 41 41"><rect x="0" y="0" width="41" height="41" fill="#dcdcdc"/><circle cx="1.5" cy="0.5" r="1" fill="#aaa"/><circle cx="1.5" cy="40.5" r="1" fill="#aaa"/><circle cx="0.5" cy="1.5" r="1" fill="#aaa"/><circle cx="40.5" cy="1.5" r="1" fill="#aaa"/><circle cx="4.5" cy="0.5" r="1" fill="#aaa"/><circle cx="4.5" cy="40.5" r="1" fill="#aaa"/><circle cx="0.5" cy="4.5" r="1" fill="#aaa"/><circle cx="40.5" cy="4.5" r="1" fill="#aaa"/><circle cx="7.5" cy="0.5" r="1" fill="#aaa"/><circle cx="7.5" cy="40.5" r="1" fill="#aaa"/><circle cx="0.5" cy="7.5" r="1" fill="#aaa"/><circle cx="40.5" cy="7.5" r="1" fill="#aaa"/><circle cx="10.5" cy="0.5" r="1" fill="#aaa"/><circle cx="10.5" cy="40.5" r="1" fill="#aaa"/><circle cx="0.5" cy="10.5" r="1" fill="#aaa"/><circle cx="40.5" cy="10.5" r="1" fill="#aaa"/><circle cx="13.5" cy="0.5" r="1" fill="#aaa"/><circle cx="13.5" cy="40.5" r="1" fill="#aaa"/><circle cx="0.5" cy="13.5" r="1" fill="#aaa"/><circle cx="40.5" cy="13.5" r="1" fill="#aaa"/><circle cx="16.5" cy="0.5" r="1" fill="#aaa"/><circle cx="16.5" cy="40.5" r="1" fill="#aaa"/><circle cx="0.5" cy="16.5" r="1" fill="#aaa"/><circle cx="40.5" cy="16.5" r="1" fill="#aaa"/><circle cx="19.5" cy="0.5" r="1" fill="#aaa"/><circle cx="19.5" cy="40.5" r="1" fill="#aaa"/><circle cx="0.5" cy="19.5" r="1" fill="#aaa"/><circle cx="40.5" cy="19.5" r="1" fill="#aaa"/><circle cx="22.5" cy="0.5" r="1" fill="#aaa"/><circle cx="22.5" cy="40.5" r="1" fill="#aaa"/><circle cx="0.5" cy="22.5" r="1" fill="#aaa"/><circle cx="40.5" cy="22.5" r="1" fill="#aaa"/><circle cx="25.5" cy="0.5" r="1" fill="#aaa"/><circle cx="25.5" cy="40.5" r="1" fill="#aaa"/><circle cx="0.5" cy="25.5" r="1" fill="#aaa"/><circle cx="40.5" cy="25.5" r="1" fill="#aaa"/><circle cx="28.5" cy="0.5" r="1" fill="#aaa"/><circle cx="28.5" cy="40.5" r="1" fill="#aaa"/><circle cx="0.5" cy="28.5" r="1" fill="#aaa"/><circle cx="40.5" cy="28.5" r="1" fill="#aaa"/><circle cx="31.5" cy="0.5" r="1" fill="#aaa"/><circle cx="31.5" cy="40.5" r="1" fill="#aaa"/><circle cx="0.5" cy="31.5" r="1" fill="#aaa"/><circle cx="40.5" cy="31.5" r="1" fill="#aaa"/><circle cx="34.5" cy="0.5" r="1" fill="#aaa"/><circle cx="34.5" cy="40.5" r="1" fill="#aaa"/><circle cx="0.5" cy="34.5" r="1" fill="#aaa"/><circle cx="40.5" cy="34.5" r="1" fill="#aaa"/><circle cx="37.5" cy="0.5" r="1" fill="#aaa"/><circle cx="37.5" cy="40.5" r="1" fill="#aaa"/><circle cx="0.5" cy="37.5" r="1" fill="#aaa"/><circle cx="40.5" cy="37.5" r="1" fill="#aaa"/><circle cx="40.5" cy="0.5" r="1" fill="#aaa"/><circle cx="40.5" cy="40.5" r="1" fill="#aaa"/><circle cx="0.5" cy="40.5" r="1" fill="#aaa"/><circle cx="40.5" cy="40.5" r="1" fill="#aaa"/><rect x="4" y="4" width="33" height="33" fill="#8d94b8"/><path d="M4,4 H30 Q36,10 34,18 Q30,16 26,20 L4,24 Z" fill="#6f7aa8"/><path d="M10,12 Q14,4 24,6 Q32,10 30,20 Q28,30 20,32 Q12,30 10,22 Z" fill="#b88a78"/><path d="M12,10 Q18,4 26,8 Q20,10 16,16 Q13,14 12,10 Z" fill="#6a4a3a"/><path d="M20,14 Q26,14 27,22 Q24,28 20,26 Z" fill="#dcb8a8"/><rect x="4" y="30" width="33" height="7" fill="#5a4a48"/><text x="7" y="35" font-family="Liberation Serif" font-style="italic" font-weight="bold" font-size="15" fill="#0a0a0a">yam</text></svg>
<svg style="position:absolute;left:872px;top:1038px" width="31" height="24" viewBox="0 0 31 24"><polygon points="1,9 8,2 29,2 22,9" fill="#b87838" stroke="#555"/><polygon points="22,9 29,2 29,15 22,22" fill="#a06428" stroke="#555"/><rect x="1" y="9" width="21" height="13" fill="#a86828" stroke="#555"/><line x1="12" y1="9" x2="19" y2="2" stroke="#555"/></svg>
<svg style="position:absolute;left:916px;top:1012px" width="64" height="64" viewBox="0 0 64 64"><circle cx="32" cy="31.5" r="30.5" fill="#0a62a4"/><text x="32" y="35" text-anchor="middle" font-family="Liberation Sans" font-weight="bold" font-size="19" fill="#fff">RNO</text><text x="32" y="45" text-anchor="middle" font-family="Liberation Sans" font-weight="bold" font-size="7" fill="#f0c000">PDF</text></svg>
<svg style="position:absolute;left:986px;top:1023px" width="41" height="41" viewBox="0 0 41 41"><circle cx="20" cy="20" r="18.5" fill="#c05a60" stroke="#fff" stroke-width="1.8"/><circle cx="20" cy="20" r="17" fill="none" stroke="#b04850" stroke-width="1"/><polygon points="15,11 15,29 28,20" fill="#fff"/></svg>
<svg style="position:absolute;left:1038px;top:1026px" width="44" height="34" viewBox="0 0 44 34"><g transform="skewY(4)"><text x="21" y="11" text-anchor="middle" font-family="Liberation Sans" font-weight="bold" font-size="10" fill="#222" transform="translate(0.7,0.7)">AmiMod</text><text x="21" y="11" text-anchor="middle" font-family="Liberation Sans" font-weight="bold" font-size="10" fill="#f4f4f4">AmiMod</text></g><polygon points="2,11 41,13 41,31 2,30" fill="#151515"/><rect x="3" y="13" width="37" height="1.5" fill="#5a6a9a"/><rect x="5" y="27" width="34" height="1.5" fill="#5a6a9a"/><rect x="2" y="17" width="6" height="1" fill="#6a7aaa"/><rect x="2" y="20" width="6" height="1" fill="#6a7aaa"/><rect x="2" y="23" width="6" height="1" fill="#6a7aaa"/><rect x="35" y="17" width="6" height="1" fill="#6a7aaa"/><rect x="35" y="20" width="6" height="1" fill="#6a7aaa"/><rect x="35" y="23" width="6" height="1" fill="#6a7aaa"/><text x="23" y="27" text-anchor="middle" font-family="Liberation Sans" font-weight="bold" font-size="11" fill="#f4f4f4" transform="translate(23,0) scale(0.82,1) translate(-23,0)">ON AIR</text></svg>
<svg style="position:absolute;left:1090px;top:1017px" width="60" height="55" viewBox="0 0 60 55"><rect x="2" y="47" width="57" height="7" fill="#000"/><rect x="1" y="46" width="57" height="6" fill="#c07070"/><path d="M5,48 V8 Q5,2 12,2 H48 Q55,2 55,8 V48 Z" fill="#b89090" stroke="#111" stroke-width="1"/><circle cx="30" cy="27" r="24" fill="#8a5e58" stroke="#222" stroke-width="1"/><circle cx="30" cy="26" r="20" fill="#a07a78"/><path d="M12,40 Q14,18 30,12 Q46,18 48,40 Q40,30 30,30 Q20,30 12,40 Z" fill="#70443a"/><circle cx="30" cy="25" r="11" fill="#9a7878"/><circle cx="30" cy="25" r="9" fill="#fff"/><path d="M27,19 L30,22 L33,19 V34 L30,37 L27,34 Z" fill="#b8a0a0"/><path d="M20,36 L30,42 L40,36 L37,47 H23 Z" fill="#d06868"/><rect x="27" y="41" width="6" height="5" fill="#e0b020"/><rect x="23" y="46" width="14" height="3" fill="#4a6ab0"/><rect x="22" y="44" width="4" height="2" fill="#e0b020"/><rect x="34" y="44" width="4" height="2" fill="#e0b020"/></svg>
<svg style="position:absolute;left:1155px;top:1027px" width="64" height="32" viewBox="0 0 64 32"><g fill="#6a96d8" transform="translate(2,9)"><polygon points="0,0 9,0 14,8 17,3 16,0 25,0 30,8 33,2 32,0 37,0 30,14 24,14 20,8 17,14 11,14" /></g><g fill="#000" transform="translate(0,8)"><polygon points="0,0 9,0 14,8 17,3 16,0 25,0 30,8 33,2 32,0 37,0 30,14 24,14 20,8 17,14 11,14" /></g><g fill="#6a96d8" transform="translate(30,16)"><polygon points="0,0 8,0 12,7 15,2 14,0 22,0 26,7 29,2 28,0 33,0 27,13 22,13 18,7 15,13 10,13" /></g><g fill="#000" transform="translate(28,15)"><polygon points="0,0 8,0 12,7 15,2 14,0 22,0 26,7 29,2 28,0 33,0 27,13 22,13 18,7 15,13 10,13" /></g><polygon points="37,2 53,2 55,3 42,22 38,22 49,6 36,6" fill="#000"/><polygon points="36,1 51,1 40,20 37,20 47,5 35,5" fill="#fff"/></svg>
<svg style="position:absolute;left:1221px;top:1018px" width="46" height="46" viewBox="0 0 46 46"><g transform="translate(23,23)"><g transform="rotate(-3)"><path d="M-3.5,2 C-4.5,-6 -2.5,-13 -1,-17 C-2.5,-19.5 -5,-19.5 -7,-18.5 C-3,-22 2.5,-21.5 3,-17 C4,-11 4.5,-5 3.8,2 Z" fill="#4c4c4c" stroke="#7a6258" stroke-width="0.5"/></g><g transform="rotate(69)"><path d="M-3.5,2 C-4.5,-6 -2.5,-13 -1,-17 C-2.5,-19.5 -5,-19.5 -7,-18.5 C-3,-22 2.5,-21.5 3,-17 C4,-11 4.5,-5 3.8,2 Z" fill="#4c4c4c" stroke="#7a6258" stroke-width="0.5"/></g><g transform="rotate(141)"><path d="M-3.5,2 C-4.5,-6 -2.5,-13 -1,-17 C-2.5,-19.5 -5,-19.5 -7,-18.5 C-3,-22 2.5,-21.5 3,-17 C4,-11 4.5,-5 3.8,2 Z" fill="#4c4c4c" stroke="#7a6258" stroke-width="0.5"/></g><g transform="rotate(213)"><path d="M-3.5,2 C-4.5,-6 -2.5,-13 -1,-17 C-2.5,-19.5 -5,-19.5 -7,-18.5 C-3,-22 2.5,-21.5 3,-17 C4,-11 4.5,-5 3.8,2 Z" fill="#4c4c4c" stroke="#7a6258" stroke-width="0.5"/></g><g transform="rotate(285)"><path d="M-3.5,2 C-4.5,-6 -2.5,-13 -1,-17 C-2.5,-19.5 -5,-19.5 -7,-18.5 C-3,-22 2.5,-21.5 3,-17 C4,-11 4.5,-5 3.8,2 Z" fill="#4c4c4c" stroke="#7a6258" stroke-width="0.5"/></g><circle r="4.5" fill="#4c4c4c"/></g></svg>
<svg style="position:absolute;left:1275px;top:1020px" width="46" height="46" viewBox="0 0 46 46"><path d="M22,22 L22,3 A19,19 0 0 1 38.5,31.5 Z" fill="#66cc99"/><path d="M22,22 L38.5,31.5 A19,19 0 0 1 3,22 Z" fill="#6699cc"/><path d="M20,20 L20,1 A19,19 0 0 0 1,20 Z" fill="#cc6060"/></svg>
<svg style="position:absolute;left:1333px;top:1025px" width="37" height="36" viewBox="0 0 37 36"><rect width="36" height="35" fill="#000"/><ellipse cx="18" cy="17.5" rx="15" ry="14" fill="#fff"/><rect x="10" y="2" width="3.5" height="31" fill="#000"/><path d="M16,3 H24 A7,7 0 0 1 24,17 H16 Z" fill="#000"/><path d="M19,7 H23 A3,3 0 0 1 23,13 H19 Z" fill="#fff"/><rect x="16" y="17" width="3" height="16" fill="#000"/></svg>
<div style="left:1px;top:1px;width:789px;height:111px;background:#6688bb;"></div>
<div style="left:1px;top:23px;width:789px;height:1px;background:#000000;"></div>
<div style="left:789px;top:1px;width:1px;height:111px;background:#000000;"></div>
<div style="left:1px;top:111px;width:789px;height:1px;background:#000000;"></div>
<div style="left:3px;top:24px;width:1px;height:87px;background:#000000;"></div>
<div style="left:4px;top:24px;width:783px;height:86px;background:repeating-conic-gradient(#ffffff 0 25%,#aaaaaa 0 50%) 0 0/2px 2px;"></div>
<div style="left:4px;top:110px;width:783px;height:1px;background:#ffffff;"></div>
<div style="left:786px;top:24px;width:1px;height:87px;background:#ffffff;"></div>
<div class="t" style="left:5px;top:6px;font-weight:normal;font-size:13px;line-height:12px;color:#000000;transform:scaleX(0.9500);-webkit-text-stroke:0.25px currentColor;">ERROR:</div>
<div style="left:766px;top:1px;width:1px;height:22px;background:#000000;"></div>
<div style="left:767px;top:1px;width:1px;height:22px;background:#ffffff;"></div>
<div style="left:771px;top:5px;width:11px;height:10px;background:#aaaaaa;border:1px solid #000;box-sizing:border-box;"></div>
<div style="left:775px;top:9px;width:11px;height:10px;background:#ffffff;border:1px solid #000;box-sizing:border-box;"></div>
<div style="left:16px;top:38px;width:758px;height:27px;background:#aaaaaa;"></div>
<div style="left:16px;top:38px;width:758px;height:1px;background:#000000;"></div>
<div style="left:16px;top:38px;width:1px;height:27px;background:#000000;"></div>
<div style="left:16px;top:64px;width:758px;height:1px;background:#ffffff;"></div>
<div style="left:773px;top:38px;width:1px;height:27px;background:#ffffff;"></div>
<div class="t" style="left:83px;top:46px;font-weight:normal;font-size:12px;line-height:12px;color:#000000;letter-spacing:0.80px;-webkit-text-stroke:0.25px currentColor;">file_Open: Unable to read "/data/map/tile_desert.png" : Objekt nicht gefunden!</div>
<div style="left:376px;top:79px;width:39px;height:17px;background:#aaaaaa;"></div>
<div style="left:376px;top:79px;width:39px;height:1px;background:#ffffff;"></div>
<div style="left:376px;top:79px;width:1px;height:17px;background:#ffffff;"></div>
<div style="left:376px;top:95px;width:39px;height:1px;background:#000000;"></div>
<div style="left:414px;top:79px;width:1px;height:17px;background:#000000;"></div>
<div class="t" style="left:387px;top:81px;font-weight:normal;font-size:12px;line-height:12px;color:#000000;letter-spacing:0.80px;-webkit-text-stroke:0.25px currentColor;">OK</div>
<svg style="position:absolute;left:392px;top:70px" width="16" height="16" viewBox="0 0 16 16"><polygon points="2,2 8,5 6,6 13,13 12,14 5,7 4,9" fill="#e03838"/><line x1="2" y1="2" x2="13" y2="13" stroke="#000" stroke-width="1"/></svg></body></html>
